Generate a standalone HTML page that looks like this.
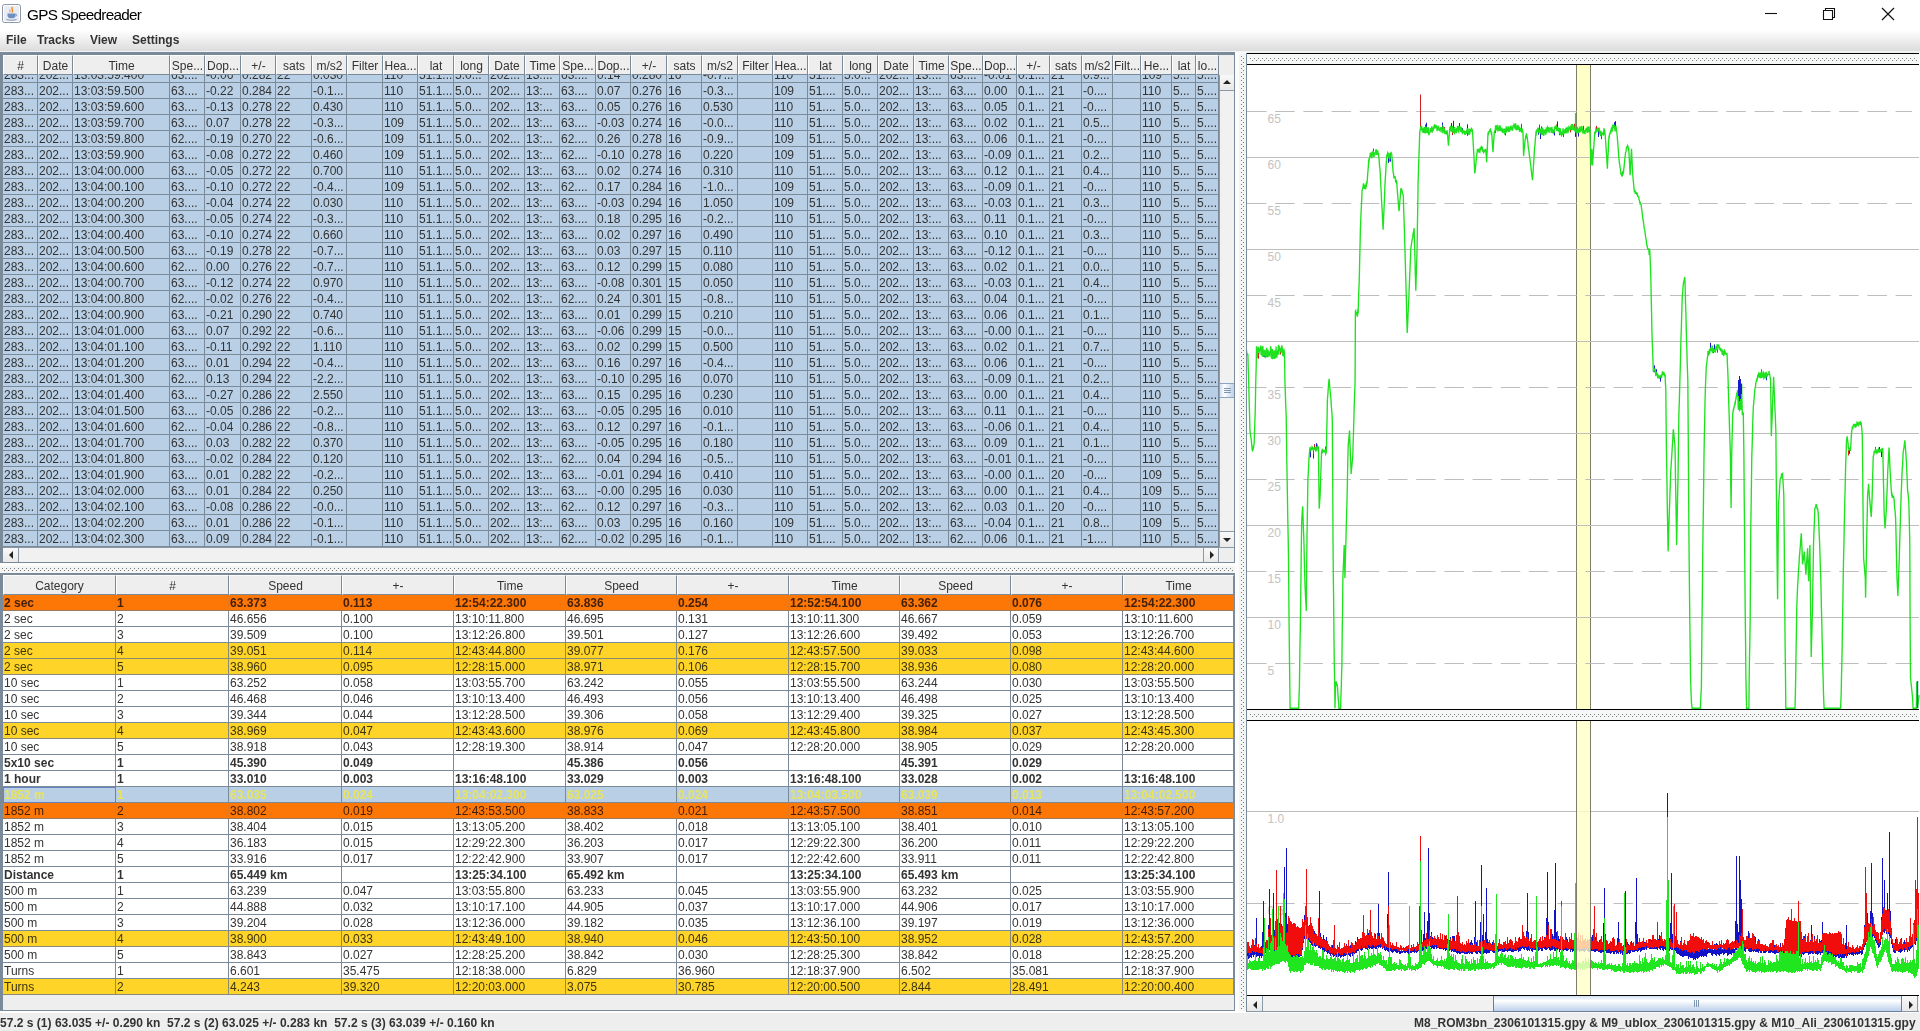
<!DOCTYPE html>
<html lang="en"><head><meta charset="utf-8"><title>GPS Speedreader</title>
<style>
*{margin:0;padding:0;box-sizing:border-box}
html,body{width:1920px;height:1031px;overflow:hidden}
body{position:relative;background:#eee;-webkit-font-smoothing:antialiased;font-family:"Liberation Sans",sans-serif;font-size:12px;color:#333;line-height:15px}
.a{position:absolute}
#tb,#mb,.h,.st{will-change:transform}
#tb{left:0;top:0;width:1920px;height:30px;background:#fff}
#tt{left:27px;top:5px;font-size:15.3px;line-height:20px;color:#000;white-space:nowrap;letter-spacing:-0.72px}
#mb{left:0;top:30px;width:1920px;height:22px;background:linear-gradient(#fff,#dcdcdc);border-bottom:1px solid #f1f4f7}
#mb b{position:absolute;top:3px;line-height:14px;color:#333;white-space:nowrap}
.dk{background:#7a8a99}
.h{display:flex;position:absolute;height:20px;background:#eee}
.h span{flex:none;height:20px;border-top:1px solid #fff;border-left:1px solid #fff;border-right:1px solid #7a8a99;border-bottom:1px solid #7a8a99;text-align:center;white-space:nowrap;overflow:hidden;line-height:16px;padding-top:2px;color:#333}
.h span.l{text-align:left}
.r{display:flex;height:16px}
.r span{flex:none;height:16px;border-right:1px solid #7a8a99;border-bottom:1px solid #7a8a99;white-space:nowrap;overflow:hidden;padding-left:1px;line-height:15px;padding-top:1px}
#t1{will-change:transform;left:3px;top:75px;width:1216px;height:472px;overflow:hidden;background:#b8cfe5}
#t1i{position:absolute;left:0;top:-8px}
#t2{will-change:transform;left:3px;top:595px;width:1231px;height:400px;background:#fff}
.o span{background:#fc7705;border-right-color:#ec7714;border-bottom-color:#9a7a5c;color:#45200a}
.y span{background:#fed428;color:#3d3410;border-right-color:#8c8a72;border-bottom-color:#8c8a72}
.b span{font-weight:bold}
.s span{background:#b8cfe5;color:#e9e45c}
.s span:first-child{outline:1px solid #6382bf;outline-offset:-1px}
.sbb{background:linear-gradient(#f8f8f8,#e9e9e9)}
.sbh{background:linear-gradient(#f8f8f8,#e9e9e9)}
.dotsh{background-color:#f7f9f9;background-image:radial-gradient(circle at 0.5px 0.5px,#777 0.6px,transparent 0.9px),radial-gradient(circle at 2.5px 2.5px,#777 0.6px,transparent 0.9px);background-size:4px 4px}

#t1 .r span:nth-child(1),#h1 span:nth-child(1){width:35px}
#t1 .r span:nth-child(2),#h1 span:nth-child(2){width:35px}
#t1 .r span:nth-child(3),#h1 span:nth-child(3){width:97px}
#t1 .r span:nth-child(4),#h1 span:nth-child(4){width:35px}
#t1 .r span:nth-child(5),#h1 span:nth-child(5){width:36px}
#t1 .r span:nth-child(6),#h1 span:nth-child(6){width:35px}
#t1 .r span:nth-child(7),#h1 span:nth-child(7){width:36px}
#t1 .r span:nth-child(8),#h1 span:nth-child(8){width:35px}
#t1 .r span:nth-child(9),#h1 span:nth-child(9){width:36px}
#t1 .r span:nth-child(10),#h1 span:nth-child(10){width:35px}
#t1 .r span:nth-child(11),#h1 span:nth-child(11){width:36px}
#t1 .r span:nth-child(12),#h1 span:nth-child(12){width:35px}
#t1 .r span:nth-child(13),#h1 span:nth-child(13){width:36px}
#t1 .r span:nth-child(14),#h1 span:nth-child(14){width:35px}
#t1 .r span:nth-child(15),#h1 span:nth-child(15){width:36px}
#t1 .r span:nth-child(16),#h1 span:nth-child(16){width:35px}
#t1 .r span:nth-child(17),#h1 span:nth-child(17){width:36px}
#t1 .r span:nth-child(18),#h1 span:nth-child(18){width:35px}
#t1 .r span:nth-child(19),#h1 span:nth-child(19){width:36px}
#t1 .r span:nth-child(20),#h1 span:nth-child(20){width:35px}
#t1 .r span:nth-child(21),#h1 span:nth-child(21){width:35px}
#t1 .r span:nth-child(22),#h1 span:nth-child(22){width:35px}
#t1 .r span:nth-child(23),#h1 span:nth-child(23){width:35px}
#t1 .r span:nth-child(24),#h1 span:nth-child(24){width:36px}
#t1 .r span:nth-child(25),#h1 span:nth-child(25){width:35px}
#t1 .r span:nth-child(26),#h1 span:nth-child(26){width:34px}
#t1 .r span:nth-child(27),#h1 span:nth-child(27){width:34px}
#t1 .r span:nth-child(28),#h1 span:nth-child(28){width:33px}
#t1 .r span:nth-child(29),#h1 span:nth-child(29){width:32px}
#t1 .r span:nth-child(30),#h1 span:nth-child(30){width:31px}
#t1 .r span:nth-child(31),#h1 span:nth-child(31){width:28px}
#t1 .r span:nth-child(32),#h1 span:nth-child(32){width:31px}
#t1 .r span:nth-child(33),#h1 span:nth-child(33){width:24px}
#t1 .r span:nth-child(34),#h1 span:nth-child(34){width:23px}
#t2 .r span:nth-child(1),#h2 span:nth-child(1){width:113px}
#t2 .r span:nth-child(2),#h2 span:nth-child(2){width:113px}
#t2 .r span:nth-child(3),#h2 span:nth-child(3){width:113px}
#t2 .r span:nth-child(4),#h2 span:nth-child(4){width:112px}
#t2 .r span:nth-child(5),#h2 span:nth-child(5){width:112px}
#t2 .r span:nth-child(6),#h2 span:nth-child(6){width:111px}
#t2 .r span:nth-child(7),#h2 span:nth-child(7){width:112px}
#t2 .r span:nth-child(8),#h2 span:nth-child(8){width:111px}
#t2 .r span:nth-child(9),#h2 span:nth-child(9){width:111px}
#t2 .r span:nth-child(10),#h2 span:nth-child(10){width:112px}
#t2 .r span:nth-child(11),#h2 span:nth-child(11){width:111px}</style></head>
<body>
<div class="a" id="tb">
<svg class="a" style="left:2px;top:4px" width="20" height="20" viewBox="0 0 20 20"><rect x="0.5" y="0.5" width="18" height="18" rx="2" fill="#e9ecf2" stroke="#8d97a8"/><rect x="1.5" y="1.5" width="16" height="16" rx="1.5" fill="none" stroke="#fff"/><path d="M10.5 3c-2 2 1.5 3-0.5 5.5" stroke="#e8842c" stroke-width="1.4" fill="none"/><path d="M8 5.5c-1 1 .8 1.6-.2 2.8" stroke="#e8842c" stroke-width="1" fill="none"/><path d="M5.5 9.5h8v2.2c0 1.6-1.6 2.6-4 2.6s-4-1-4-2.6z" fill="#6f8fc0"/><path d="M13.5 10.2c1.6-.2 1.8 1.8 0 1.9" stroke="#6f8fc0" stroke-width="0.9" fill="none"/><path d="M4.5 15.5c3 1 7 1 10 0" stroke="#7f95b8" stroke-width="1" fill="none"/></svg>
<div class="a" id="tt">GPS Speedreader</div>
<svg class="a" style="left:1750px;top:0" width="170" height="30" viewBox="0 0 170 30" fill="none" stroke="#111" stroke-width="1.1"><path d="M15 13.5h12"/><path d="M73.5 10.5h9v9h-9z M75.5 10.5v-2h9v9h-2"/><path d="M132 8l12 12M144 8l-12 12" stroke-width="1.2"/></svg>
</div>
<div class="a" id="mb"><b style="left:6px">File</b><b style="left:37px">Tracks</b><b style="left:90px">View</b><b style="left:132px">Settings</b></div>
<div class="a dk" style="left:0;top:52px;width:1235px;height:3px"></div>
<div class="a dk" style="left:0;top:52px;width:3px;height:511px"></div>
<div class="a dk" style="left:1234px;top:52px;width:1px;height:511px"></div>
<div class="a dk" style="left:0;top:562px;width:1235px;height:1px"></div>
<div class="h" id="h1" style="left:3px;top:55px;width:1231px">
<span>#</span>
<span>Date</span>
<span>Time</span>
<span>Spe...</span>
<span>Dop...</span>
<span>+/-</span>
<span>sats</span>
<span>m/s2</span>
<span>Filter</span>
<span>Hea...</span>
<span>lat</span>
<span>long</span>
<span>Date</span>
<span>Time</span>
<span>Spe...</span>
<span>Dop...</span>
<span>+/-</span>
<span>sats</span>
<span>m/s2</span>
<span>Filter</span>
<span>Hea...</span>
<span>lat</span>
<span>long</span>
<span>Date</span>
<span>Time</span>
<span>Spe...</span>
<span>Dop...</span>
<span>+/-</span>
<span>sats</span>
<span>m/s2</span>
<span>Filt...</span>
<span>He...</span>
<span>lat</span>
<span>lo...</span>
</div>
<div class="a" id="t1"><div id="t1i">
<div class="r"><span>283...</span><span>202...</span><span>13:03:59.400</span><span>63....</span><span>-0.06</span><span>0.282</span><span>22</span><span>0.030</span><span></span><span>110</span><span>51.1...</span><span>5.0...</span><span>202...</span><span>13:...</span><span>63....</span><span>0.14</span><span>0.280</span><span>16</span><span>-0.7...</span><span></span><span>110</span><span>51....</span><span>5.0...</span><span>202...</span><span>13:...</span><span>63....</span><span>-0.01</span><span>0.1...</span><span>21</span><span>0.9...</span><span></span><span>109</span><span>5...</span><span>5....</span></div>
<div class="r"><span>283...</span><span>202...</span><span>13:03:59.500</span><span>63....</span><span>-0.22</span><span>0.284</span><span>22</span><span>-0.1...</span><span></span><span>110</span><span>51.1...</span><span>5.0...</span><span>202...</span><span>13:...</span><span>63....</span><span>0.07</span><span>0.276</span><span>16</span><span>-0.3...</span><span></span><span>109</span><span>51....</span><span>5.0...</span><span>202...</span><span>13:...</span><span>63....</span><span>0.00</span><span>0.1...</span><span>21</span><span>-0....</span><span></span><span>110</span><span>5...</span><span>5....</span></div>
<div class="r"><span>283...</span><span>202...</span><span>13:03:59.600</span><span>63....</span><span>-0.13</span><span>0.278</span><span>22</span><span>0.430</span><span></span><span>110</span><span>51.1...</span><span>5.0...</span><span>202...</span><span>13:...</span><span>63....</span><span>0.05</span><span>0.276</span><span>16</span><span>0.530</span><span></span><span>110</span><span>51....</span><span>5.0...</span><span>202...</span><span>13:...</span><span>63....</span><span>0.05</span><span>0.1...</span><span>21</span><span>-0....</span><span></span><span>110</span><span>5...</span><span>5....</span></div>
<div class="r"><span>283...</span><span>202...</span><span>13:03:59.700</span><span>63....</span><span>0.07</span><span>0.278</span><span>22</span><span>-0.3...</span><span></span><span>109</span><span>51.1...</span><span>5.0...</span><span>202...</span><span>13:...</span><span>63....</span><span>-0.03</span><span>0.274</span><span>16</span><span>-0.0...</span><span></span><span>110</span><span>51....</span><span>5.0...</span><span>202...</span><span>13:...</span><span>63....</span><span>0.02</span><span>0.1...</span><span>21</span><span>0.5...</span><span></span><span>110</span><span>5...</span><span>5....</span></div>
<div class="r"><span>283...</span><span>202...</span><span>13:03:59.800</span><span>62....</span><span>-0.19</span><span>0.270</span><span>22</span><span>-0.6...</span><span></span><span>109</span><span>51.1...</span><span>5.0...</span><span>202...</span><span>13:...</span><span>62....</span><span>0.26</span><span>0.278</span><span>16</span><span>-0.9...</span><span></span><span>109</span><span>51....</span><span>5.0...</span><span>202...</span><span>13:...</span><span>63....</span><span>0.06</span><span>0.1...</span><span>21</span><span>-0....</span><span></span><span>110</span><span>5...</span><span>5....</span></div>
<div class="r"><span>283...</span><span>202...</span><span>13:03:59.900</span><span>63....</span><span>-0.08</span><span>0.272</span><span>22</span><span>0.460</span><span></span><span>109</span><span>51.1...</span><span>5.0...</span><span>202...</span><span>13:...</span><span>62....</span><span>-0.10</span><span>0.278</span><span>16</span><span>0.220</span><span></span><span>109</span><span>51....</span><span>5.0...</span><span>202...</span><span>13:...</span><span>63....</span><span>-0.09</span><span>0.1...</span><span>21</span><span>0.2...</span><span></span><span>110</span><span>5...</span><span>5....</span></div>
<div class="r"><span>283...</span><span>202...</span><span>13:04:00.000</span><span>63....</span><span>-0.05</span><span>0.272</span><span>22</span><span>0.700</span><span></span><span>110</span><span>51.1...</span><span>5.0...</span><span>202...</span><span>13:...</span><span>63....</span><span>0.02</span><span>0.274</span><span>16</span><span>0.310</span><span></span><span>110</span><span>51....</span><span>5.0...</span><span>202...</span><span>13:...</span><span>63....</span><span>0.12</span><span>0.1...</span><span>21</span><span>0.4...</span><span></span><span>110</span><span>5...</span><span>5....</span></div>
<div class="r"><span>283...</span><span>202...</span><span>13:04:00.100</span><span>63....</span><span>-0.10</span><span>0.272</span><span>22</span><span>-0.4...</span><span></span><span>109</span><span>51.1...</span><span>5.0...</span><span>202...</span><span>13:...</span><span>62....</span><span>0.17</span><span>0.284</span><span>16</span><span>-1.0...</span><span></span><span>109</span><span>51....</span><span>5.0...</span><span>202...</span><span>13:...</span><span>63....</span><span>-0.09</span><span>0.1...</span><span>21</span><span>-0....</span><span></span><span>110</span><span>5...</span><span>5....</span></div>
<div class="r"><span>283...</span><span>202...</span><span>13:04:00.200</span><span>63....</span><span>-0.04</span><span>0.274</span><span>22</span><span>0.030</span><span></span><span>110</span><span>51.1...</span><span>5.0...</span><span>202...</span><span>13:...</span><span>63....</span><span>-0.03</span><span>0.294</span><span>16</span><span>1.050</span><span></span><span>109</span><span>51....</span><span>5.0...</span><span>202...</span><span>13:...</span><span>63....</span><span>-0.03</span><span>0.1...</span><span>21</span><span>0.3...</span><span></span><span>110</span><span>5...</span><span>5....</span></div>
<div class="r"><span>283...</span><span>202...</span><span>13:04:00.300</span><span>63....</span><span>-0.05</span><span>0.274</span><span>22</span><span>-0.3...</span><span></span><span>110</span><span>51.1...</span><span>5.0...</span><span>202...</span><span>13:...</span><span>63....</span><span>0.18</span><span>0.295</span><span>16</span><span>-0.2...</span><span></span><span>110</span><span>51....</span><span>5.0...</span><span>202...</span><span>13:...</span><span>63....</span><span>0.11</span><span>0.1...</span><span>21</span><span>-0....</span><span></span><span>110</span><span>5...</span><span>5....</span></div>
<div class="r"><span>283...</span><span>202...</span><span>13:04:00.400</span><span>63....</span><span>-0.10</span><span>0.274</span><span>22</span><span>0.660</span><span></span><span>110</span><span>51.1...</span><span>5.0...</span><span>202...</span><span>13:...</span><span>63....</span><span>0.02</span><span>0.297</span><span>16</span><span>0.490</span><span></span><span>110</span><span>51....</span><span>5.0...</span><span>202...</span><span>13:...</span><span>63....</span><span>0.10</span><span>0.1...</span><span>21</span><span>0.3...</span><span></span><span>110</span><span>5...</span><span>5....</span></div>
<div class="r"><span>283...</span><span>202...</span><span>13:04:00.500</span><span>63....</span><span>-0.19</span><span>0.278</span><span>22</span><span>-0.7...</span><span></span><span>110</span><span>51.1...</span><span>5.0...</span><span>202...</span><span>13:...</span><span>63....</span><span>0.03</span><span>0.297</span><span>15</span><span>0.110</span><span></span><span>110</span><span>51....</span><span>5.0...</span><span>202...</span><span>13:...</span><span>63....</span><span>-0.12</span><span>0.1...</span><span>21</span><span>-0....</span><span></span><span>110</span><span>5...</span><span>5....</span></div>
<div class="r"><span>283...</span><span>202...</span><span>13:04:00.600</span><span>62....</span><span>0.00</span><span>0.276</span><span>22</span><span>-0.7...</span><span></span><span>110</span><span>51.1...</span><span>5.0...</span><span>202...</span><span>13:...</span><span>63....</span><span>0.12</span><span>0.299</span><span>15</span><span>0.080</span><span></span><span>110</span><span>51....</span><span>5.0...</span><span>202...</span><span>13:...</span><span>63....</span><span>0.02</span><span>0.1...</span><span>21</span><span>0.0...</span><span></span><span>110</span><span>5...</span><span>5....</span></div>
<div class="r"><span>283...</span><span>202...</span><span>13:04:00.700</span><span>63....</span><span>-0.12</span><span>0.274</span><span>22</span><span>0.970</span><span></span><span>110</span><span>51.1...</span><span>5.0...</span><span>202...</span><span>13:...</span><span>63....</span><span>-0.08</span><span>0.301</span><span>15</span><span>0.050</span><span></span><span>110</span><span>51....</span><span>5.0...</span><span>202...</span><span>13:...</span><span>63....</span><span>-0.03</span><span>0.1...</span><span>21</span><span>0.4...</span><span></span><span>110</span><span>5...</span><span>5....</span></div>
<div class="r"><span>283...</span><span>202...</span><span>13:04:00.800</span><span>62....</span><span>-0.02</span><span>0.276</span><span>22</span><span>-0.4...</span><span></span><span>110</span><span>51.1...</span><span>5.0...</span><span>202...</span><span>13:...</span><span>62....</span><span>0.24</span><span>0.301</span><span>15</span><span>-0.8...</span><span></span><span>110</span><span>51....</span><span>5.0...</span><span>202...</span><span>13:...</span><span>63....</span><span>0.04</span><span>0.1...</span><span>21</span><span>-0....</span><span></span><span>110</span><span>5...</span><span>5....</span></div>
<div class="r"><span>283...</span><span>202...</span><span>13:04:00.900</span><span>63....</span><span>-0.21</span><span>0.290</span><span>22</span><span>0.740</span><span></span><span>110</span><span>51.1...</span><span>5.0...</span><span>202...</span><span>13:...</span><span>63....</span><span>0.01</span><span>0.299</span><span>15</span><span>0.210</span><span></span><span>110</span><span>51....</span><span>5.0...</span><span>202...</span><span>13:...</span><span>63....</span><span>0.06</span><span>0.1...</span><span>21</span><span>0.1...</span><span></span><span>110</span><span>5...</span><span>5....</span></div>
<div class="r"><span>283...</span><span>202...</span><span>13:04:01.000</span><span>63....</span><span>0.07</span><span>0.292</span><span>22</span><span>-0.6...</span><span></span><span>110</span><span>51.1...</span><span>5.0...</span><span>202...</span><span>13:...</span><span>63....</span><span>-0.06</span><span>0.299</span><span>15</span><span>-0.0...</span><span></span><span>110</span><span>51....</span><span>5.0...</span><span>202...</span><span>13:...</span><span>63....</span><span>-0.00</span><span>0.1...</span><span>21</span><span>-0....</span><span></span><span>110</span><span>5...</span><span>5....</span></div>
<div class="r"><span>283...</span><span>202...</span><span>13:04:01.100</span><span>63....</span><span>-0.11</span><span>0.292</span><span>22</span><span>1.110</span><span></span><span>110</span><span>51.1...</span><span>5.0...</span><span>202...</span><span>13:...</span><span>63....</span><span>0.02</span><span>0.299</span><span>15</span><span>0.500</span><span></span><span>110</span><span>51....</span><span>5.0...</span><span>202...</span><span>13:...</span><span>63....</span><span>0.02</span><span>0.1...</span><span>21</span><span>0.7...</span><span></span><span>110</span><span>5...</span><span>5....</span></div>
<div class="r"><span>283...</span><span>202...</span><span>13:04:01.200</span><span>63....</span><span>0.01</span><span>0.294</span><span>22</span><span>-0.4...</span><span></span><span>110</span><span>51.1...</span><span>5.0...</span><span>202...</span><span>13:...</span><span>63....</span><span>0.16</span><span>0.297</span><span>16</span><span>-0.4...</span><span></span><span>110</span><span>51....</span><span>5.0...</span><span>202...</span><span>13:...</span><span>63....</span><span>0.06</span><span>0.1...</span><span>21</span><span>-0....</span><span></span><span>110</span><span>5...</span><span>5....</span></div>
<div class="r"><span>283...</span><span>202...</span><span>13:04:01.300</span><span>62....</span><span>0.13</span><span>0.294</span><span>22</span><span>-2.2...</span><span></span><span>110</span><span>51.1...</span><span>5.0...</span><span>202...</span><span>13:...</span><span>63....</span><span>-0.10</span><span>0.295</span><span>16</span><span>0.070</span><span></span><span>110</span><span>51....</span><span>5.0...</span><span>202...</span><span>13:...</span><span>63....</span><span>-0.09</span><span>0.1...</span><span>21</span><span>0.2...</span><span></span><span>110</span><span>5...</span><span>5....</span></div>
<div class="r"><span>283...</span><span>202...</span><span>13:04:01.400</span><span>63....</span><span>-0.27</span><span>0.286</span><span>22</span><span>2.550</span><span></span><span>110</span><span>51.1...</span><span>5.0...</span><span>202...</span><span>13:...</span><span>63....</span><span>0.15</span><span>0.295</span><span>16</span><span>0.230</span><span></span><span>110</span><span>51....</span><span>5.0...</span><span>202...</span><span>13:...</span><span>63....</span><span>0.00</span><span>0.1...</span><span>21</span><span>0.4...</span><span></span><span>110</span><span>5...</span><span>5....</span></div>
<div class="r"><span>283...</span><span>202...</span><span>13:04:01.500</span><span>63....</span><span>-0.05</span><span>0.286</span><span>22</span><span>-0.2...</span><span></span><span>110</span><span>51.1...</span><span>5.0...</span><span>202...</span><span>13:...</span><span>63....</span><span>-0.05</span><span>0.295</span><span>16</span><span>0.010</span><span></span><span>110</span><span>51....</span><span>5.0...</span><span>202...</span><span>13:...</span><span>63....</span><span>0.11</span><span>0.1...</span><span>21</span><span>-0....</span><span></span><span>110</span><span>5...</span><span>5....</span></div>
<div class="r"><span>283...</span><span>202...</span><span>13:04:01.600</span><span>62....</span><span>-0.04</span><span>0.286</span><span>22</span><span>-0.8...</span><span></span><span>110</span><span>51.1...</span><span>5.0...</span><span>202...</span><span>13:...</span><span>63....</span><span>0.12</span><span>0.297</span><span>16</span><span>-0.1...</span><span></span><span>110</span><span>51....</span><span>5.0...</span><span>202...</span><span>13:...</span><span>63....</span><span>-0.06</span><span>0.1...</span><span>21</span><span>0.4...</span><span></span><span>110</span><span>5...</span><span>5....</span></div>
<div class="r"><span>283...</span><span>202...</span><span>13:04:01.700</span><span>63....</span><span>0.03</span><span>0.282</span><span>22</span><span>0.370</span><span></span><span>110</span><span>51.1...</span><span>5.0...</span><span>202...</span><span>13:...</span><span>63....</span><span>-0.05</span><span>0.295</span><span>16</span><span>0.180</span><span></span><span>110</span><span>51....</span><span>5.0...</span><span>202...</span><span>13:...</span><span>63....</span><span>0.09</span><span>0.1...</span><span>21</span><span>0.1...</span><span></span><span>110</span><span>5...</span><span>5....</span></div>
<div class="r"><span>283...</span><span>202...</span><span>13:04:01.800</span><span>63....</span><span>-0.02</span><span>0.284</span><span>22</span><span>0.120</span><span></span><span>110</span><span>51.1...</span><span>5.0...</span><span>202...</span><span>13:...</span><span>62....</span><span>0.04</span><span>0.294</span><span>16</span><span>-0.5...</span><span></span><span>110</span><span>51....</span><span>5.0...</span><span>202...</span><span>13:...</span><span>63....</span><span>-0.01</span><span>0.1...</span><span>21</span><span>-0....</span><span></span><span>110</span><span>5...</span><span>5....</span></div>
<div class="r"><span>283...</span><span>202...</span><span>13:04:01.900</span><span>63....</span><span>0.01</span><span>0.282</span><span>22</span><span>-0.2...</span><span></span><span>110</span><span>51.1...</span><span>5.0...</span><span>202...</span><span>13:...</span><span>63....</span><span>-0.01</span><span>0.294</span><span>16</span><span>0.410</span><span></span><span>110</span><span>51....</span><span>5.0...</span><span>202...</span><span>13:...</span><span>63....</span><span>-0.00</span><span>0.1...</span><span>20</span><span>-0....</span><span></span><span>109</span><span>5...</span><span>5....</span></div>
<div class="r"><span>283...</span><span>202...</span><span>13:04:02.000</span><span>63....</span><span>0.01</span><span>0.284</span><span>22</span><span>0.250</span><span></span><span>110</span><span>51.1...</span><span>5.0...</span><span>202...</span><span>13:...</span><span>63....</span><span>-0.00</span><span>0.295</span><span>16</span><span>0.030</span><span></span><span>110</span><span>51....</span><span>5.0...</span><span>202...</span><span>13:...</span><span>63....</span><span>0.00</span><span>0.1...</span><span>21</span><span>0.4...</span><span></span><span>109</span><span>5...</span><span>5....</span></div>
<div class="r"><span>283...</span><span>202...</span><span>13:04:02.100</span><span>63....</span><span>-0.08</span><span>0.286</span><span>22</span><span>-0.0...</span><span></span><span>110</span><span>51.1...</span><span>5.0...</span><span>202...</span><span>13:...</span><span>62....</span><span>0.12</span><span>0.297</span><span>16</span><span>-0.3...</span><span></span><span>110</span><span>51....</span><span>5.0...</span><span>202...</span><span>13:...</span><span>62....</span><span>0.03</span><span>0.1...</span><span>20</span><span>-0....</span><span></span><span>110</span><span>5...</span><span>5....</span></div>
<div class="r"><span>283...</span><span>202...</span><span>13:04:02.200</span><span>63....</span><span>0.01</span><span>0.286</span><span>22</span><span>-0.1...</span><span></span><span>110</span><span>51.1...</span><span>5.0...</span><span>202...</span><span>13:...</span><span>63....</span><span>0.03</span><span>0.295</span><span>16</span><span>0.160</span><span></span><span>109</span><span>51....</span><span>5.0...</span><span>202...</span><span>13:...</span><span>63....</span><span>-0.04</span><span>0.1...</span><span>21</span><span>0.8...</span><span></span><span>109</span><span>5...</span><span>5....</span></div>
<div class="r"><span>283...</span><span>202...</span><span>13:04:02.300</span><span>63....</span><span>0.09</span><span>0.284</span><span>22</span><span>-0.1...</span><span></span><span>110</span><span>51.1...</span><span>5.0...</span><span>202...</span><span>13:...</span><span>62....</span><span>-0.02</span><span>0.295</span><span>16</span><span>-0.1...</span><span></span><span>110</span><span>51....</span><span>5.0...</span><span>202...</span><span>13:...</span><span>62....</span><span>0.06</span><span>0.1...</span><span>21</span><span>-1....</span><span></span><span>110</span><span>5...</span><span>5....</span></div>
</div></div>
<div class="a" style="left:1219px;top:75px;width:15px;height:472px;background:#f1f1f1;border-left:1px solid #8b98a6"></div>
<div class="a sbb" style="left:1220px;top:75px;width:14px;height:16px;border-bottom:1px solid #8b98a6"></div>
<div class="a sbb" style="left:1220px;top:531px;width:14px;height:16px;border-top:1px solid #8b98a6"></div>
<svg class="a" style="left:1220px;top:75px" width="14" height="472" viewBox="0 0 14 472"><path d="M3 9h8l-4-4z" fill="#222"/><path d="M3 463h8l-4 4z" fill="#222"/></svg>
<div class="a" style="left:1219px;top:383px;width:15px;height:15px;border:1px solid #8ea3c0;border-right:0;background:linear-gradient(90deg,#d3e0f2 0%,#fff 32%,#e3ecf6 58%,#bdd0ec 100%)"></div>
<svg class="a" style="left:1220px;top:383px" width="14" height="15"><path d="M4 5.5h7M4 7.5h7M4 9.5h7" stroke="#7f95b0" stroke-width="1"/></svg>
<div class="a" style="left:3px;top:547px;width:1231px;height:15px;background:#f1f1f1;border-top:1px solid #8b98a6"></div>
<div class="a sbh" style="left:3px;top:548px;width:16px;height:14px;border-right:1px solid #8b98a6"></div>
<div class="a sbh" style="left:1203px;top:548px;width:16px;height:14px;border-left:1px solid #8b98a6;border-right:1px solid #8b98a6"></div>
<svg class="a" style="left:3px;top:548px" width="1216" height="14" viewBox="0 0 1216 14"><path d="M10 3v8l-4-4z" fill="#222"/><path d="M1207 3v8l4-4z" fill="#222"/></svg>
<div class="a" style="left:1220px;top:548px;width:14px;height:14px;background:#eee"></div>
<div class="a" style="left:0;top:563px;width:1235px;height:10px;background:#fcfcfc"></div>
<div class="a" style="left:0;top:566px;width:1235px;height:7px;background:#f3f5f5"></div>
<div class="a dotsh" style="left:2px;top:568px;width:1232px;height:4px;background-color:#f3f5f5"></div>
<div class="a" style="left:1235px;top:52px;width:11px;height:960px;background:#fcfcfc"></div>
<div class="a" style="left:1239px;top:54px;width:7px;height:958px;background:#f3f5f5"></div>
<div class="a dotsh" style="left:1241px;top:56px;width:4px;height:954px;background-color:#f3f5f5"></div>
<div class="a dk" style="left:1246px;top:53px;width:1px;height:959px"></div>
<div class="a dk" style="left:0;top:573px;width:1235px;height:2px"></div>
<div class="a dk" style="left:0;top:573px;width:3px;height:438px"></div>
<div class="a dk" style="left:1234px;top:573px;width:1px;height:438px"></div>
<div class="a dk" style="left:0;top:1010px;width:1235px;height:1px"></div>
<div class="a" style="left:0;top:1011px;width:1246px;height:2px;background:#fff"></div>
<div class="a" style="left:1246px;top:1012px;width:674px;height:1px;background:#fafafa"></div>
<div class="a" style="left:0;top:1030px;width:1920px;height:1px;background:#e6ebeb"></div>
<div class="h" id="h2" style="left:3px;top:575px;width:1231px">
<span>Category</span>
<span>#</span>
<span>Speed</span>
<span>+-</span>
<span>Time</span>
<span>Speed</span>
<span>+-</span>
<span>Time</span>
<span>Speed</span>
<span>+-</span>
<span>Time</span>
</div>
<div class="a" id="t2">
<div class="r o b"><span>2 sec</span><span>1</span><span>63.373</span><span>0.113</span><span>12:54:22.300</span><span>63.836</span><span>0.254</span><span>12:52:54.100</span><span>63.362</span><span>0.076</span><span>12:54:22.300</span></div>
<div class="r "><span>2 sec</span><span>2</span><span>46.656</span><span>0.100</span><span>13:10:11.800</span><span>46.695</span><span>0.131</span><span>13:10:11.300</span><span>46.667</span><span>0.059</span><span>13:10:11.600</span></div>
<div class="r "><span>2 sec</span><span>3</span><span>39.509</span><span>0.100</span><span>13:12:26.800</span><span>39.501</span><span>0.127</span><span>13:12:26.600</span><span>39.492</span><span>0.053</span><span>13:12:26.700</span></div>
<div class="r y"><span>2 sec</span><span>4</span><span>39.051</span><span>0.114</span><span>12:43:44.800</span><span>39.077</span><span>0.176</span><span>12:43:57.500</span><span>39.033</span><span>0.098</span><span>12:43:44.600</span></div>
<div class="r y"><span>2 sec</span><span>5</span><span>38.960</span><span>0.095</span><span>12:28:15.000</span><span>38.971</span><span>0.106</span><span>12:28:15.700</span><span>38.936</span><span>0.080</span><span>12:28:20.000</span></div>
<div class="r "><span>10 sec</span><span>1</span><span>63.252</span><span>0.058</span><span>13:03:55.700</span><span>63.242</span><span>0.055</span><span>13:03:55.500</span><span>63.244</span><span>0.030</span><span>13:03:55.500</span></div>
<div class="r "><span>10 sec</span><span>2</span><span>46.468</span><span>0.046</span><span>13:10:13.400</span><span>46.493</span><span>0.056</span><span>13:10:13.400</span><span>46.498</span><span>0.025</span><span>13:10:13.400</span></div>
<div class="r "><span>10 sec</span><span>3</span><span>39.344</span><span>0.044</span><span>13:12:28.500</span><span>39.306</span><span>0.058</span><span>13:12:29.400</span><span>39.325</span><span>0.027</span><span>13:12:28.500</span></div>
<div class="r y"><span>10 sec</span><span>4</span><span>38.969</span><span>0.047</span><span>12:43:43.600</span><span>38.976</span><span>0.069</span><span>12:43:45.800</span><span>38.984</span><span>0.037</span><span>12:43:45.300</span></div>
<div class="r "><span>10 sec</span><span>5</span><span>38.918</span><span>0.043</span><span>12:28:19.300</span><span>38.914</span><span>0.047</span><span>12:28:20.000</span><span>38.905</span><span>0.029</span><span>12:28:20.000</span></div>
<div class="r b"><span>5x10 sec</span><span>1</span><span>45.390</span><span>0.049</span><span></span><span>45.386</span><span>0.056</span><span></span><span>45.391</span><span>0.029</span><span></span></div>
<div class="r b"><span>1 hour</span><span>1</span><span>33.010</span><span>0.003</span><span>13:16:48.100</span><span>33.029</span><span>0.003</span><span>13:16:48.100</span><span>33.028</span><span>0.002</span><span>13:16:48.100</span></div>
<div class="r s b"><span>1852 m</span><span>1</span><span>63.035</span><span>0.024</span><span>13:04:02.300</span><span>63.025</span><span>0.024</span><span>13:04:03.500</span><span>63.039</span><span>0.013</span><span>13:04:02.500</span></div>
<div class="r o"><span>1852 m</span><span>2</span><span>38.802</span><span>0.019</span><span>12:43:53.500</span><span>38.833</span><span>0.021</span><span>12:43:57.500</span><span>38.851</span><span>0.014</span><span>12:43:57.200</span></div>
<div class="r "><span>1852 m</span><span>3</span><span>38.404</span><span>0.015</span><span>13:13:05.200</span><span>38.402</span><span>0.018</span><span>13:13:05.100</span><span>38.401</span><span>0.010</span><span>13:13:05.100</span></div>
<div class="r "><span>1852 m</span><span>4</span><span>36.183</span><span>0.015</span><span>12:29:22.300</span><span>36.203</span><span>0.017</span><span>12:29:22.300</span><span>36.200</span><span>0.011</span><span>12:29:22.200</span></div>
<div class="r "><span>1852 m</span><span>5</span><span>33.916</span><span>0.017</span><span>12:22:42.900</span><span>33.907</span><span>0.017</span><span>12:22:42.600</span><span>33.911</span><span>0.011</span><span>12:22:42.800</span></div>
<div class="r b"><span>Distance</span><span>1</span><span>65.449 km</span><span></span><span>13:25:34.100</span><span>65.492 km</span><span></span><span>13:25:34.100</span><span>65.493 km</span><span></span><span>13:25:34.100</span></div>
<div class="r "><span>500 m</span><span>1</span><span>63.239</span><span>0.047</span><span>13:03:55.800</span><span>63.233</span><span>0.045</span><span>13:03:55.900</span><span>63.232</span><span>0.025</span><span>13:03:55.900</span></div>
<div class="r "><span>500 m</span><span>2</span><span>44.888</span><span>0.032</span><span>13:10:17.100</span><span>44.905</span><span>0.037</span><span>13:10:17.000</span><span>44.906</span><span>0.017</span><span>13:10:17.000</span></div>
<div class="r "><span>500 m</span><span>3</span><span>39.204</span><span>0.028</span><span>13:12:36.000</span><span>39.182</span><span>0.035</span><span>13:12:36.100</span><span>39.197</span><span>0.019</span><span>13:12:36.000</span></div>
<div class="r y"><span>500 m</span><span>4</span><span>38.900</span><span>0.033</span><span>12:43:49.100</span><span>38.940</span><span>0.046</span><span>12:43:50.100</span><span>38.952</span><span>0.028</span><span>12:43:57.200</span></div>
<div class="r "><span>500 m</span><span>5</span><span>38.843</span><span>0.027</span><span>12:28:25.200</span><span>38.842</span><span>0.030</span><span>12:28:25.300</span><span>38.842</span><span>0.018</span><span>12:28:25.200</span></div>
<div class="r "><span>Turns</span><span>1</span><span>6.601</span><span>35.475</span><span>12:18:38.000</span><span>6.829</span><span>36.960</span><span>12:18:37.900</span><span>6.502</span><span>35.081</span><span>12:18:37.900</span></div>
<div class="r y"><span>Turns</span><span>2</span><span>4.243</span><span>39.320</span><span>12:20:03.000</span><span>3.075</span><span>30.785</span><span>12:20:00.500</span><span>2.844</span><span>28.491</span><span>12:20:00.400</span></div>
</div>
<svg class="a" style="left:0;top:0" width="1920" height="1031" viewBox="0 0 1920 1031" font-family="Liberation Sans, sans-serif">
<defs><pattern id="dp" x="1250" y="58" width="4" height="4" patternUnits="userSpaceOnUse"><rect x="0" y="0" width="1" height="1" fill="#7c7c7c"/><rect x="2" y="2" width="1" height="1" fill="#7c7c7c"/></pattern><clipPath id="c1"><rect x="1247" y="65" width="673" height="644"/></clipPath><clipPath id="c2"><rect x="1247" y="721" width="673" height="274"/></clipPath></defs>
<rect x="1247" y="53" width="673" height="959" fill="#fff"/>
<rect x="1247" y="53" width="672" height="12" fill="#f6f8f8"/>
<rect x="1247" y="53" width="672" height="1" fill="#000"/>
<rect x="1247" y="64" width="672" height="1" fill="#000"/>
<rect x="1247" y="709" width="672" height="12" fill="#f6f8f8"/>
<rect x="1247" y="709" width="672" height="1" fill="#000"/>
<rect x="1247" y="720" width="672" height="1" fill="#000"/>
<rect x="1250" y="58" width="668" height="4" fill="url(#dp)"/>
<rect x="1250" y="714" width="668" height="4" fill="url(#dp)"/>
<rect x="1247" y="995" width="672" height="1" fill="#000"/>
<rect x="1577" y="65" width="13" height="644" fill="#ffffc8" fill-opacity="1"/>
<rect x="1576" y="65" width="1" height="644" fill="#7d7d6a"/>
<rect x="1590" y="65" width="1" height="644" fill="#7d7d6a"/>
<path d="M1247 663.5H1912" stroke="#bdbdbd" stroke-dasharray="19.5 8.7" fill="none"/>
<text x="1267.5" y="674.7" font-size="12" fill="#c3c3c3">5</text>
<path d="M1247 617.5H1919" stroke="#bdbdbd" fill="none"/>
<text x="1267.5" y="628.7" font-size="12" fill="#c3c3c3">10</text>
<path d="M1247 571.5H1912" stroke="#bdbdbd" stroke-dasharray="19.5 8.7" fill="none"/>
<text x="1267.5" y="582.7" font-size="12" fill="#c3c3c3">15</text>
<path d="M1247 525.5H1919" stroke="#bdbdbd" fill="none"/>
<text x="1267.5" y="536.7" font-size="12" fill="#c3c3c3">20</text>
<path d="M1247 479.5H1912" stroke="#bdbdbd" stroke-dasharray="19.5 8.7" fill="none"/>
<text x="1267.5" y="490.7" font-size="12" fill="#c3c3c3">25</text>
<path d="M1247 433.5H1919" stroke="#bdbdbd" fill="none"/>
<text x="1267.5" y="444.7" font-size="12" fill="#c3c3c3">30</text>
<path d="M1247 387.5H1912" stroke="#bdbdbd" stroke-dasharray="19.5 8.7" fill="none"/>
<text x="1267.5" y="398.7" font-size="12" fill="#c3c3c3">35</text>
<path d="M1247 341.5H1919" stroke="#bdbdbd" fill="none"/>
<path d="M1247 295.5H1912" stroke="#bdbdbd" stroke-dasharray="19.5 8.7" fill="none"/>
<text x="1267.5" y="306.7" font-size="12" fill="#c3c3c3">45</text>
<path d="M1247 249.5H1919" stroke="#bdbdbd" fill="none"/>
<text x="1267.5" y="260.7" font-size="12" fill="#c3c3c3">50</text>
<path d="M1247 203.5H1912" stroke="#bdbdbd" stroke-dasharray="19.5 8.7" fill="none"/>
<text x="1267.5" y="214.7" font-size="12" fill="#c3c3c3">55</text>
<path d="M1247 157.5H1919" stroke="#bdbdbd" fill="none"/>
<text x="1267.5" y="168.7" font-size="12" fill="#c3c3c3">60</text>
<path d="M1247 111.5H1912" stroke="#bdbdbd" stroke-dasharray="19.5 8.7" fill="none"/>
<text x="1267.5" y="122.7" font-size="12" fill="#c3c3c3">65</text>
<path d="M1247 811.5H1919" stroke="#bdbdbd" fill="none"/>
<path d="M1247 903.5H1912" stroke="#bdbdbd" stroke-dasharray="19.5 8.7" fill="none"/>
<text x="1267.5" y="822.7" font-size="12" fill="#c3c3c3">1.0</text>
<text x="1267.5" y="914.7" font-size="12" fill="#c3c3c3">0.5</text>
<g clip-path="url(#c1)">
<path d="M1261.5 350.7v3.7M1264.5 351.8v5.3M1284.5 351.8v5.5M1310.5 449.9v7.5M1313.5 449.6v8.9M1314.5 449.8v-5.4M1316.5 449.2v-6.0M1335.5 683.6v6.6M1355.5 313.6v4.4M1365.5 185.5v3.7M1388.5 155.6v7.3M1390.5 155.6v6.0M1426.5 129.8v-7.1M1442.5 129.3v-6.8M1451.5 129.1v-6.1M1453.5 129.5v-8.7M1459.5 129.3v-6.2M1462.5 131.9v-3.9M1467.5 130.9v-6.6M1505.5 130.0v5.4M1521.5 129.7v-4.1M1538.5 130.6v4.1M1540.5 130.6v8.4M1554.5 129.0v6.5M1557.5 129.1v-7.7M1559.5 130.6v4.6M1575.5 128.6v8.3M1578.5 129.9v6.7M1598.5 130.9v6.1M1614.5 127.5v-5.4M1615.5 128.3v-7.2M1654.5 372.2v-6.8M1656.5 374.2v-4.9M1660.5 375.9v5.7M1710.5 350.2v-7.4M1714.5 349.6v-5.2M1766.5 374.3v6.0M1849.5 450.1v3.7M1879.5 451.0v-4.0M1881.5 448.8v8.3" fill="none" stroke="#1a1ad0" stroke-width="1"/>
<path d="M1258.5 352.7v6.0M1263.5 350.9v6.1M1280.5 350.4v4.1M1313.5 449.6v4.7M1314.5 449.8v-5.3M1317.5 448.3v-3.7M1325.5 451.7v-5.2M1373.5 154.8v-6.3M1389.5 155.7v5.7M1425.5 129.8v-5.4M1428.5 130.6v3.7M1444.5 131.0v-3.9M1449.5 129.7v6.0M1452.5 129.3v5.8M1467.5 131.0v4.9M1495.5 128.7v4.5M1521.5 129.7v-5.9M1539.5 130.4v-5.8M1541.5 131.3v-5.0M1556.5 128.6v-4.1M1559.5 131.0v3.8M1561.5 131.7v4.8M1563.5 130.7v6.4M1570.5 128.8v3.6M1571.5 127.7v-3.7M1574.5 128.2v-4.4M1583.5 130.7v-4.9M1596.5 130.0v-4.2M1601.5 132.8v6.4M1713.5 349.2v3.9M1717.5 348.6v4.1M1761.5 374.7v-5.4M1848.5 450.3v5.2M1875.5 451.2v-4.3" fill="none" stroke="#e01a1a" stroke-width="1"/>
<path d="M1420.5 94.5V130" stroke="#d02020" stroke-width="1" fill="none"/>
<polyline points="1246.6,350.5 1246.9,353.8 1247.3,354.4 1247.6,353.4 1247.9,355.1 1248.2,366.7 1248.6,378.3 1248.9,389.9 1249.2,403.1 1249.6,416.3 1249.9,429.5 1250.2,431.9 1250.5,434.7 1250.8,437.5 1251.1,438.7 1251.4,441.1 1251.7,445.0 1251.9,446.8 1252.2,449.9 1252.5,450.7 1252.8,450.2 1253.1,449.4 1253.4,446.6 1253.6,446.8 1253.9,445.2 1254.2,442.7 1254.5,432.8 1254.8,422.9 1255.2,413.0 1255.5,396.5 1255.8,380.0 1256.2,366.4 1256.5,346.9 1256.8,346.9 1257.0,353.2 1257.3,358.1 1257.6,351.3 1257.9,349.3 1258.1,351.8 1258.4,346.9 1258.7,349.2 1258.9,351.7 1259.2,352.3 1259.5,348.9 1259.8,348.7 1260.0,348.4 1260.3,351.1 1260.6,348.8 1260.8,345.4 1261.1,355.2 1261.4,351.6 1261.7,352.5 1261.9,346.8 1262.2,356.6 1262.5,355.0 1262.8,346.0 1263.0,348.6 1263.3,353.5 1263.6,353.5 1263.8,356.5 1264.1,350.4 1264.4,355.6 1264.7,353.9 1264.9,349.7 1265.2,353.4 1265.5,357.3 1265.7,357.1 1266.0,353.1 1266.3,354.3 1266.6,347.7 1266.8,350.4 1267.1,357.2 1267.4,352.6 1267.7,349.6 1267.9,354.2 1268.2,356.1 1268.5,355.6 1268.7,351.9 1269.0,352.5 1269.3,353.3 1269.6,356.5 1269.8,353.2 1270.1,351.6 1270.4,352.7 1270.6,347.0 1270.9,347.2 1271.2,355.3 1271.5,358.7 1271.7,354.0 1272.0,351.6 1272.3,349.0 1272.5,353.1 1272.8,359.1 1273.1,356.6 1273.4,353.8 1273.6,357.8 1273.9,350.2 1274.2,353.6 1274.5,359.0 1274.7,354.3 1275.0,352.7 1275.3,350.3 1275.5,353.5 1275.8,358.3 1276.1,346.4 1276.4,355.7 1276.6,355.9 1276.9,356.4 1277.2,354.3 1277.4,354.9 1277.7,351.1 1278.0,351.4 1278.3,349.5 1278.5,344.8 1278.8,354.7 1279.1,350.9 1279.4,346.3 1279.6,350.1 1279.9,349.9 1280.2,348.4 1280.4,348.4 1280.7,350.9 1281.0,352.1 1281.3,352.1 1281.5,350.4 1281.8,345.3 1282.1,347.9 1282.3,347.4 1282.6,352.6 1282.9,356.1 1283.2,355.4 1283.4,355.4 1283.7,355.7 1284.0,348.8 1284.3,356.0 1284.5,351.8 1284.9,380.0 1285.2,389.1 1285.5,398.1 1285.8,407.2 1286.2,416.3 1286.5,438.3 1286.8,460.3 1287.2,482.2 1287.5,501.2 1287.8,520.2 1288.2,539.1 1288.5,558.1 1288.8,592.2 1289.1,626.3 1289.5,660.3 1289.8,684.3 1290.1,708.2 1290.4,708.2 1290.7,708.2 1291.0,708.2 1291.2,708.2 1291.5,708.2 1291.8,708.2 1292.1,708.2 1292.3,708.2 1292.6,708.2 1292.9,708.2 1293.2,708.2 1293.5,708.2 1293.7,708.2 1294.0,708.2 1294.3,708.2 1294.6,708.2 1294.8,708.2 1295.1,708.2 1295.4,708.2 1295.7,708.2 1295.9,708.2 1296.2,708.2 1296.5,708.2 1296.8,708.2 1297.0,708.2 1297.3,708.2 1297.6,708.2 1297.9,708.2 1298.2,708.2 1298.4,708.2 1298.7,708.2 1299.0,697.4 1299.4,686.7 1299.7,665.3 1300.0,643.9 1300.4,622.4 1300.7,601.0 1301.0,574.6 1301.3,548.2 1301.7,521.8 1302.0,516.7 1302.3,511.5 1302.7,506.3 1303.0,516.0 1303.3,525.6 1303.7,535.3 1304.0,544.9 1304.3,558.1 1304.6,571.3 1305.0,584.5 1305.3,591.1 1305.6,597.7 1306.0,604.3 1306.3,610.9 1306.6,574.6 1307.0,538.3 1307.3,518.5 1307.6,498.7 1307.9,478.9 1308.3,472.8 1308.6,466.6 1308.9,460.4 1309.3,454.6 1309.6,450.9 1309.9,448.0 1310.2,447.8 1310.5,451.4 1310.8,448.7 1311.0,447.8 1311.3,450.3 1311.6,448.8 1311.9,447.3 1312.1,447.8 1312.4,449.6 1312.7,447.8 1313.0,448.4 1313.2,450.6 1313.5,449.4 1313.8,448.8 1314.1,449.6 1314.3,447.4 1314.6,449.2 1314.9,449.4 1315.2,448.2 1315.5,447.8 1315.7,451.7 1316.0,449.6 1316.3,447.9 1316.6,449.8 1316.8,450.6 1317.1,446.4 1317.4,446.1 1317.7,446.5 1317.9,449.2 1318.2,446.2 1318.5,449.3 1318.8,478.9 1319.2,508.6 1319.5,504.2 1319.8,499.8 1320.1,495.4 1320.5,485.1 1320.8,474.8 1321.1,464.5 1321.5,454.5 1321.8,450.7 1322.1,450.3 1322.3,448.9 1322.6,453.0 1322.9,452.3 1323.2,451.1 1323.4,449.8 1323.7,452.1 1324.0,451.0 1324.2,452.0 1324.5,450.8 1324.8,452.3 1325.1,449.5 1325.3,450.6 1325.6,454.0 1325.9,453.5 1326.1,450.5 1326.4,450.9 1326.7,433.9 1327.1,416.8 1327.4,399.8 1327.7,396.2 1328.0,392.6 1328.2,389.1 1328.5,385.5 1328.8,381.9 1329.1,378.9 1329.3,381.1 1329.6,385.1 1329.9,387.8 1330.1,390.3 1330.4,393.1 1330.7,396.5 1331.0,400.3 1331.2,404.2 1331.5,408.0 1331.8,411.9 1332.1,415.7 1332.3,419.6 1332.7,478.9 1333.0,538.3 1333.3,572.4 1333.7,606.5 1334.0,640.6 1334.3,663.1 1334.7,685.6 1335.0,708.2 1335.3,696.6 1335.6,681.3 1335.9,685.5 1336.2,681.2 1336.5,685.0 1336.7,685.7 1337.0,683.8 1337.3,685.1 1337.6,688.9 1337.8,692.8 1338.1,696.6 1338.4,700.5 1338.7,704.3 1338.9,708.2 1339.2,708.2 1339.5,708.2 1339.8,708.2 1340.0,708.2 1340.3,708.2 1340.6,708.2 1340.9,697.0 1341.3,685.9 1341.6,674.8 1341.9,663.6 1342.2,635.1 1342.6,606.5 1342.9,577.9 1343.2,569.6 1343.6,561.4 1343.9,553.2 1344.2,544.9 1344.6,561.4 1344.9,577.9 1345.2,565.8 1345.5,553.7 1345.9,541.6 1346.2,529.2 1346.5,516.9 1346.9,504.5 1347.2,492.1 1347.5,476.7 1347.8,461.4 1348.2,445.5 1348.5,442.6 1348.8,438.9 1349.2,434.6 1349.5,430.5 1349.8,437.7 1350.0,445.0 1350.3,452.2 1350.6,459.5 1350.9,466.7 1351.1,474.0 1351.4,470.8 1351.7,467.7 1352.0,464.5 1352.2,462.2 1352.5,458.8 1352.8,455.9 1353.1,444.3 1353.5,432.8 1353.8,421.2 1354.1,409.7 1354.4,399.8 1354.8,389.9 1355.1,380.0 1355.4,311.4 1355.7,310.8 1356.0,314.9 1356.3,312.2 1356.6,313.6 1356.9,312.3 1357.2,316.1 1357.5,316.2 1357.8,309.6 1358.1,313.9 1358.4,304.0 1358.7,294.1 1359.1,284.2 1359.4,274.3 1359.7,258.9 1360.1,243.5 1360.4,228.1 1360.7,222.1 1360.9,216.0 1361.2,210.0 1361.5,203.9 1361.8,197.9 1362.0,191.2 1362.4,189.2 1362.7,188.5 1363.0,187.2 1363.3,184.2 1363.6,183.4 1363.9,186.9 1364.2,188.2 1364.4,188.9 1364.7,184.7 1365.0,188.6 1365.3,187.1 1365.6,185.5 1365.8,189.0 1366.1,183.4 1366.4,186.8 1366.7,181.9 1367.0,183.6 1367.3,180.0 1367.5,176.4 1367.8,172.9 1368.1,169.3 1368.4,165.7 1368.6,161.3 1368.9,161.8 1369.2,158.7 1369.5,158.7 1369.7,156.9 1370.0,156.1 1370.3,153.6 1370.6,153.5 1370.8,153.2 1371.1,157.4 1371.4,155.6 1371.7,158.2 1371.9,157.7 1372.2,152.3 1372.5,155.3 1372.8,152.0 1373.0,151.4 1373.3,151.5 1373.6,157.1 1373.9,156.3 1374.1,156.4 1374.4,152.6 1374.7,154.3 1374.9,155.3 1375.2,152.1 1375.5,153.2 1375.8,150.5 1376.0,149.3 1376.3,150.4 1376.6,154.8 1376.9,152.4 1377.1,154.9 1377.4,151.5 1377.7,150.3 1378.0,154.0 1378.2,154.5 1378.5,153.1 1378.8,157.2 1379.1,159.3 1379.3,162.4 1379.6,166.6 1379.9,168.3 1380.2,172.0 1380.4,177.5 1380.7,183.0 1381.0,188.5 1381.3,194.0 1381.5,199.5 1381.8,205.0 1382.2,211.2 1382.5,217.4 1382.8,223.6 1383.1,229.7 1383.4,222.9 1383.7,216.1 1384.0,209.3 1384.3,202.4 1384.6,195.6 1384.8,188.8 1385.1,181.9 1385.4,177.5 1385.7,173.1 1385.9,168.7 1386.2,164.3 1386.5,159.9 1386.8,154.5 1387.1,157.0 1387.4,154.1 1387.8,152.7 1388.0,153.2 1388.3,153.9 1388.6,157.6 1388.9,153.0 1389.2,158.8 1389.5,154.9 1389.7,159.1 1390.0,158.5 1390.3,153.9 1390.6,153.4 1390.9,154.7 1391.1,151.8 1391.4,155.5 1391.7,153.9 1392.0,157.5 1392.3,161.0 1392.5,164.6 1392.8,168.2 1393.1,171.8 1393.4,173.6 1393.6,174.0 1393.9,178.3 1394.2,176.2 1394.5,177.9 1394.7,177.9 1395.0,177.9 1395.3,177.5 1395.6,181.3 1395.8,182.1 1396.1,182.6 1396.4,179.9 1396.7,181.9 1397.0,185.6 1397.2,189.3 1397.5,193.1 1397.8,196.8 1398.1,200.5 1398.4,204.2 1398.7,207.9 1399.0,211.2 1399.3,208.5 1399.5,205.7 1399.8,201.8 1400.1,198.7 1400.4,195.4 1400.7,191.5 1400.9,188.7 1401.2,188.7 1401.5,189.3 1401.8,189.6 1402.1,191.1 1402.4,194.3 1402.7,193.3 1403.0,194.8 1403.3,195.1 1403.5,203.9 1403.8,212.7 1404.1,221.5 1404.4,230.3 1404.6,239.1 1404.9,247.9 1405.2,258.5 1405.5,269.2 1405.8,279.8 1406.1,290.4 1406.4,301.1 1406.6,311.7 1406.9,322.3 1407.2,333.0 1407.5,327.0 1407.8,321.1 1408.0,315.2 1408.3,309.2 1408.6,303.3 1408.9,297.4 1409.1,290.3 1409.4,283.2 1409.7,276.2 1410.0,269.1 1410.3,262.0 1410.6,255.0 1410.8,248.2 1411.1,247.3 1411.4,244.3 1411.7,242.5 1411.9,240.9 1412.2,239.2 1412.5,238.8 1412.8,237.3 1413.0,234.2 1413.3,232.7 1413.6,231.5 1413.9,229.9 1414.1,228.1 1414.4,238.5 1414.7,249.0 1415.0,259.4 1415.2,269.9 1415.5,280.3 1415.8,290.8 1416.1,280.0 1416.5,269.3 1416.8,258.6 1417.1,247.9 1417.4,225.9 1417.8,203.9 1418.1,181.9 1418.4,173.7 1418.6,165.4 1418.9,157.2 1419.2,148.9 1419.5,140.7 1419.7,132.8 1420.1,130.6 1420.4,128.7 1420.7,127.3 1421.0,126.3 1421.3,130.0 1421.6,126.7 1421.8,126.9 1422.1,131.1 1422.4,128.7 1422.6,132.3 1422.9,130.2 1423.2,132.8 1423.5,127.7 1423.7,130.2 1424.0,132.2 1424.3,127.0 1424.5,133.2 1424.8,127.5 1425.1,131.8 1425.4,133.3 1425.6,132.1 1425.9,128.4 1426.2,126.9 1426.5,129.9 1426.7,132.9 1427.0,128.5 1427.3,132.9 1427.5,127.7 1427.8,133.3 1428.1,127.1 1428.4,129.3 1428.6,133.6 1428.9,133.0 1429.2,133.8 1429.4,133.3 1429.7,132.7 1430.0,132.2 1430.3,128.4 1430.5,130.1 1430.8,128.0 1431.1,131.8 1431.3,131.2 1431.6,128.0 1431.9,126.4 1432.2,132.6 1432.4,131.2 1432.7,129.1 1433.0,128.8 1433.3,130.8 1433.5,127.7 1433.8,127.1 1434.1,126.6 1434.3,126.0 1434.6,124.2 1434.9,128.7 1435.2,127.1 1435.4,128.3 1435.7,124.8 1436.0,127.0 1436.2,125.6 1436.5,125.7 1436.8,126.8 1437.1,131.1 1437.3,128.2 1437.6,128.3 1437.9,130.0 1438.1,127.3 1438.4,125.8 1438.7,129.6 1439.0,129.4 1439.2,130.5 1439.5,128.9 1439.8,130.7 1440.1,131.0 1440.3,127.4 1440.6,129.2 1440.9,129.0 1441.1,127.1 1441.4,128.5 1441.7,129.6 1442.0,132.1 1442.2,132.3 1442.5,127.7 1442.8,130.6 1443.0,126.4 1443.3,126.8 1443.6,130.2 1443.9,133.0 1444.1,128.1 1444.4,132.7 1444.7,133.8 1444.9,129.9 1445.2,132.8 1445.5,134.1 1445.8,130.8 1446.0,133.3 1446.3,133.6 1446.6,132.6 1446.9,134.4 1447.1,130.4 1447.5,134.4 1447.8,137.8 1448.1,141.2 1448.4,145.6 1448.8,141.7 1449.1,137.7 1449.4,133.8 1449.8,127.9 1450.0,127.5 1450.3,129.9 1450.6,131.1 1450.8,126.0 1451.1,130.4 1451.4,130.7 1451.7,128.0 1451.9,129.3 1452.2,126.8 1452.5,130.9 1452.7,126.1 1453.0,132.9 1453.3,131.7 1453.6,130.5 1453.8,128.0 1454.1,132.6 1454.4,133.0 1454.6,127.0 1454.9,131.6 1455.2,132.0 1455.5,130.6 1455.7,130.8 1456.0,128.8 1456.3,132.1 1456.5,132.3 1456.8,128.0 1457.1,130.9 1457.3,128.1 1457.6,126.1 1457.9,127.2 1458.2,125.8 1458.4,131.4 1458.7,131.9 1459.0,125.9 1459.2,129.6 1459.5,128.4 1459.8,126.5 1460.1,128.0 1460.3,128.0 1460.6,131.9 1460.9,126.8 1461.1,128.4 1461.4,130.5 1461.7,127.7 1462.0,132.3 1462.2,132.4 1462.5,134.2 1462.8,129.8 1463.0,130.5 1463.3,132.4 1463.6,130.5 1463.9,132.7 1464.1,130.2 1464.4,133.3 1464.7,133.9 1464.9,133.9 1465.2,135.0 1465.5,131.8 1465.7,131.2 1466.0,133.8 1466.3,133.0 1466.6,131.5 1466.8,130.1 1467.1,129.4 1467.4,128.1 1467.6,133.2 1467.9,128.3 1468.2,132.9 1468.5,131.5 1468.7,134.6 1469.0,133.2 1469.3,134.8 1469.5,128.8 1469.8,131.5 1470.1,132.0 1470.4,130.1 1470.6,131.5 1470.9,130.4 1471.2,131.5 1471.4,127.6 1471.7,130.6 1472.0,130.4 1472.2,129.2 1472.5,130.8 1472.8,136.2 1473.1,141.5 1473.4,146.9 1473.7,152.2 1474.0,157.6 1474.3,163.0 1474.5,168.3 1474.8,173.5 1475.1,171.4 1475.4,168.5 1475.7,165.4 1476.0,162.9 1476.3,159.7 1476.6,156.7 1476.9,153.6 1477.2,151.3 1477.5,148.8 1477.7,151.1 1478.0,150.9 1478.3,148.9 1478.6,152.5 1478.8,148.8 1479.1,151.7 1479.4,148.7 1479.7,151.2 1479.9,153.0 1480.2,148.1 1480.5,147.1 1480.8,150.3 1481.0,149.6 1481.3,148.3 1481.6,145.7 1481.9,148.4 1482.1,148.6 1482.4,148.4 1482.7,151.7 1483.0,149.8 1483.2,150.9 1483.5,152.1 1483.8,151.2 1484.1,149.5 1484.3,151.4 1484.6,150.8 1484.9,151.1 1485.2,151.1 1485.4,149.7 1485.7,148.9 1486.0,153.3 1486.4,157.7 1486.7,162.1 1487.0,154.7 1487.4,147.3 1487.7,139.9 1488.0,133.0 1488.3,132.5 1488.6,133.3 1488.9,132.2 1489.2,132.0 1489.4,131.2 1489.7,130.9 1490.0,129.6 1490.3,129.1 1490.5,129.4 1490.8,131.6 1491.1,132.8 1491.4,132.1 1491.6,132.5 1492.0,137.4 1492.3,142.3 1492.6,147.3 1493.0,152.2 1493.3,147.3 1493.6,142.3 1494.0,137.4 1494.3,131.2 1494.6,132.8 1494.9,130.7 1495.3,129.9 1495.6,125.4 1495.9,128.8 1496.2,130.4 1496.4,128.0 1496.7,127.5 1497.0,129.6 1497.2,124.9 1497.5,128.3 1497.8,131.4 1498.1,129.5 1498.3,127.3 1498.6,129.4 1498.9,128.8 1499.1,125.9 1499.4,126.0 1499.7,131.0 1500.0,126.7 1500.2,125.5 1500.5,131.1 1500.8,129.1 1501.0,128.2 1501.3,129.5 1501.6,131.4 1501.9,127.6 1502.1,131.3 1502.4,131.9 1502.7,132.9 1503.0,129.1 1503.2,131.7 1503.5,129.0 1503.8,131.4 1504.0,128.6 1504.3,133.0 1504.6,133.5 1504.9,129.5 1505.1,128.6 1505.4,133.7 1505.7,131.7 1505.9,132.4 1506.2,126.4 1506.5,132.4 1506.8,130.2 1507.0,127.8 1507.3,128.5 1507.6,130.7 1507.8,130.8 1508.1,126.4 1508.4,129.5 1508.7,126.2 1508.9,132.0 1509.2,128.2 1509.5,131.6 1509.8,130.3 1510.0,129.5 1510.3,127.1 1510.6,129.0 1510.8,126.2 1511.1,126.2 1511.4,130.3 1511.7,127.7 1511.9,130.4 1512.2,126.7 1512.5,130.0 1512.7,129.8 1513.0,126.6 1513.3,125.0 1513.6,126.9 1513.8,127.4 1514.1,124.4 1514.4,124.8 1514.6,123.7 1514.9,127.5 1515.2,129.5 1515.5,124.6 1515.7,123.3 1516.0,128.2 1516.3,129.1 1516.6,130.3 1516.8,127.9 1517.1,126.1 1517.4,129.9 1517.6,125.0 1517.9,129.4 1518.2,125.4 1518.5,127.8 1518.7,128.8 1519.0,128.1 1519.3,126.8 1519.5,127.5 1519.8,131.9 1520.1,129.4 1520.4,130.3 1520.6,127.7 1520.9,131.3 1521.2,128.5 1521.4,130.4 1521.7,132.6 1522.0,129.9 1522.3,128.5 1522.7,132.0 1523.0,132.5 1523.3,144.0 1523.6,156.1 1523.9,152.2 1524.2,149.3 1524.5,146.6 1524.7,144.1 1525.0,140.3 1525.3,139.2 1525.6,138.3 1525.8,135.2 1526.1,138.5 1526.4,134.1 1526.7,134.4 1526.9,136.1 1527.2,137.1 1527.5,139.9 1527.8,141.6 1528.0,144.5 1528.3,147.4 1528.6,149.7 1528.9,150.3 1529.1,152.5 1529.4,156.2 1529.7,156.9 1530.0,159.5 1530.2,161.4 1530.5,163.6 1530.8,165.8 1531.1,169.2 1531.4,171.7 1531.7,173.8 1532.0,176.4 1532.3,178.3 1532.5,180.3 1532.8,175.8 1533.1,171.3 1533.4,166.8 1533.7,162.4 1534.0,157.9 1534.2,153.4 1534.5,148.8 1534.8,146.1 1535.1,143.6 1535.3,140.1 1535.6,136.5 1535.9,133.2 1536.2,133.8 1536.4,131.4 1536.7,129.7 1537.0,131.5 1537.3,131.2 1537.5,130.9 1537.8,127.5 1538.1,129.6 1538.3,130.0 1538.6,128.4 1538.9,133.2 1539.2,129.9 1539.4,131.6 1539.7,131.9 1540.0,132.2 1540.2,132.1 1540.5,132.4 1540.8,128.9 1541.0,134.2 1541.3,128.4 1541.6,134.1 1541.9,133.9 1542.1,134.1 1542.4,128.5 1542.7,129.0 1542.9,134.4 1543.2,132.0 1543.5,131.5 1543.8,136.0 1544.0,129.2 1544.3,132.8 1544.6,132.1 1544.8,129.8 1545.1,131.6 1545.4,133.7 1545.7,134.7 1545.9,128.4 1546.2,131.7 1546.5,128.3 1546.7,133.2 1547.0,127.7 1547.3,127.1 1547.5,129.4 1547.8,131.7 1548.1,128.4 1548.4,127.0 1548.6,131.6 1548.9,131.6 1549.2,131.9 1549.4,127.9 1549.7,128.7 1550.0,127.5 1550.3,129.7 1550.5,128.2 1550.8,128.3 1551.1,131.6 1551.3,132.9 1551.6,130.3 1551.9,126.9 1552.1,130.8 1552.4,129.4 1552.7,133.2 1553.0,131.2 1553.2,132.0 1553.5,131.0 1553.8,129.6 1554.0,132.1 1554.3,131.5 1554.6,127.5 1554.9,126.4 1555.1,127.8 1555.4,128.8 1555.7,125.7 1555.9,127.4 1556.2,129.1 1556.5,125.3 1556.8,130.9 1557.0,129.8 1557.3,127.5 1557.6,127.6 1557.8,128.2 1558.1,128.3 1558.4,131.6 1558.6,130.0 1558.9,130.5 1559.2,128.0 1559.5,133.8 1559.7,129.8 1560.0,130.0 1560.3,128.3 1560.5,135.0 1560.8,131.5 1561.1,134.7 1561.4,134.8 1561.6,135.0 1561.9,133.9 1562.2,134.6 1562.4,134.4 1562.7,133.4 1563.0,128.4 1563.3,131.0 1563.5,131.2 1563.8,134.1 1564.1,132.4 1564.3,131.7 1564.6,131.9 1564.9,129.0 1565.1,133.1 1565.4,130.9 1565.7,129.2 1566.0,129.6 1566.2,133.4 1566.5,130.2 1566.8,127.6 1567.0,127.5 1567.3,131.5 1567.6,130.6 1567.9,133.1 1568.1,127.9 1568.4,129.5 1568.7,131.7 1568.9,126.7 1569.2,127.0 1569.5,130.0 1569.8,127.8 1570.0,126.5 1570.3,127.4 1570.6,129.8 1570.8,128.8 1571.1,125.3 1571.4,125.1 1571.6,130.4 1571.9,128.8 1572.2,125.2 1572.5,130.1 1572.7,123.9 1573.0,126.4 1573.3,129.8 1573.5,128.9 1573.8,125.9 1574.1,130.4 1574.4,128.5 1574.6,130.6 1574.9,131.0 1575.2,127.9 1575.4,129.9 1575.7,129.2 1576.0,132.3 1576.2,131.5 1576.5,131.1 1576.8,131.9 1577.1,133.4 1577.3,128.1 1577.6,127.8 1577.9,131.8 1578.1,132.0 1578.4,130.1 1578.7,129.8 1579.0,129.2 1579.2,132.6 1579.5,131.9 1579.8,130.3 1580.0,126.3 1580.3,132.1 1580.6,129.2 1580.9,127.3 1581.1,128.1 1581.4,130.9 1581.7,126.1 1582.0,127.0 1582.2,128.4 1582.5,132.8 1582.8,131.9 1583.1,133.7 1583.3,130.7 1583.6,131.1 1583.9,131.0 1584.1,131.0 1584.4,131.1 1584.7,133.2 1585.0,134.1 1585.2,130.1 1585.5,131.6 1585.8,129.2 1586.1,129.0 1586.3,130.2 1586.6,130.6 1586.9,130.1 1587.2,132.9 1587.4,126.7 1587.7,129.8 1588.0,132.2 1588.3,130.0 1588.5,128.6 1588.8,127.0 1589.1,127.0 1589.3,130.8 1589.6,130.4 1589.9,129.2 1590.2,141.2 1590.6,153.3 1590.9,165.4 1591.2,159.9 1591.5,154.4 1591.9,148.9 1592.2,157.2 1592.5,165.4 1592.8,161.1 1593.1,156.8 1593.4,152.4 1593.7,148.1 1594.0,143.8 1594.3,139.5 1594.6,135.1 1594.8,131.6 1595.1,133.1 1595.4,133.3 1595.7,132.6 1595.9,129.2 1596.2,129.8 1596.5,132.1 1596.8,129.1 1597.0,131.8 1597.3,129.9 1597.6,129.0 1597.9,130.0 1598.1,127.7 1598.4,129.6 1598.7,130.3 1599.0,127.6 1599.2,129.0 1599.5,129.9 1599.8,134.4 1600.1,132.7 1600.3,130.8 1600.6,136.1 1600.9,130.9 1601.2,132.9 1601.4,134.6 1601.7,134.3 1602.0,132.4 1602.3,134.8 1602.5,132.6 1602.8,134.1 1603.1,132.4 1603.4,135.6 1603.6,133.6 1603.9,128.8 1604.2,128.9 1604.5,134.7 1604.7,130.4 1605.1,134.0 1605.4,138.1 1605.7,142.3 1606.0,146.7 1606.3,151.1 1606.6,155.5 1606.8,159.9 1607.1,164.3 1607.4,168.7 1607.6,163.2 1607.9,157.7 1608.2,152.2 1608.5,146.7 1608.7,141.2 1609.0,135.7 1609.3,136.4 1609.6,133.8 1609.9,134.0 1610.2,133.6 1610.5,130.2 1610.8,131.2 1611.0,131.6 1611.3,128.6 1611.6,128.3 1611.9,126.8 1612.2,130.9 1612.4,131.0 1612.7,124.6 1613.0,127.7 1613.3,126.7 1613.5,128.5 1613.8,124.6 1614.1,125.7 1614.4,125.9 1614.6,127.5 1614.9,130.0 1615.2,130.7 1615.5,130.4 1615.7,129.9 1616.0,125.9 1616.3,128.9 1616.6,131.2 1616.9,132.5 1617.2,136.2 1617.5,140.0 1617.8,143.8 1618.1,147.5 1618.4,151.3 1618.6,155.1 1618.9,158.4 1619.2,160.9 1619.5,163.8 1619.8,164.2 1620.1,167.8 1620.4,168.3 1620.6,171.0 1620.9,174.1 1621.2,174.1 1621.5,175.0 1621.8,174.2 1622.1,175.7 1622.4,175.8 1622.7,172.4 1623.0,172.8 1623.2,174.1 1623.5,172.1 1623.8,168.7 1624.1,166.8 1624.4,163.3 1624.7,160.7 1624.9,157.1 1625.2,155.9 1625.5,152.7 1625.8,152.4 1626.1,151.4 1626.3,148.3 1626.6,148.0 1626.9,146.6 1627.2,146.6 1627.4,147.5 1627.7,145.7 1628.0,146.4 1628.3,148.6 1628.5,148.1 1628.8,148.9 1629.1,155.5 1629.5,162.1 1629.8,168.7 1630.1,175.3 1630.5,168.7 1630.8,162.1 1631.1,155.5 1631.5,148.9 1631.8,155.5 1632.1,162.1 1632.4,168.7 1632.8,174.7 1633.0,177.6 1633.3,180.9 1633.6,183.7 1633.9,187.1 1634.1,189.1 1634.4,192.3 1634.7,190.5 1635.0,192.0 1635.2,191.6 1635.5,193.8 1635.8,192.1 1636.1,192.2 1636.3,193.1 1636.6,193.9 1636.9,193.5 1637.2,195.1 1637.4,193.4 1637.7,196.4 1638.0,196.6 1638.3,196.9 1638.5,196.1 1638.8,197.8 1639.1,199.9 1639.4,200.5 1639.6,201.9 1639.9,203.0 1640.2,201.9 1640.5,203.3 1640.7,203.6 1641.0,204.2 1641.3,206.3 1641.6,208.6 1641.9,210.3 1642.2,213.3 1642.5,215.7 1642.7,217.5 1643.0,219.8 1643.3,220.9 1643.6,222.9 1643.9,225.7 1644.2,228.4 1644.5,229.4 1644.8,230.5 1645.1,232.6 1645.4,235.2 1645.7,237.9 1646.0,238.6 1646.3,240.5 1646.5,243.1 1646.8,245.4 1647.1,245.4 1647.4,247.5 1647.7,248.8 1648.0,249.1 1648.3,249.5 1648.5,248.4 1648.8,249.4 1649.1,253.4 1649.4,253.1 1649.6,248.7 1649.9,252.8 1650.3,262.2 1650.6,271.5 1650.9,280.9 1651.2,297.4 1651.6,313.9 1651.9,330.3 1652.2,340.2 1652.6,350.1 1652.9,360.0 1653.2,368.8 1653.5,372.1 1653.9,369.1 1654.2,370.6 1654.4,370.4 1654.7,368.9 1655.0,368.9 1655.2,369.9 1655.5,372.0 1655.8,376.1 1656.1,374.3 1656.3,371.7 1656.6,375.2 1656.9,372.6 1657.2,374.6 1657.4,373.5 1657.7,378.3 1658.0,374.3 1658.3,377.7 1658.5,376.7 1658.8,378.3 1659.1,376.7 1659.3,378.7 1659.6,375.3 1659.9,377.2 1660.2,376.7 1660.4,376.0 1660.7,376.1 1661.0,375.8 1661.3,374.6 1661.5,378.1 1661.8,376.0 1662.1,375.3 1662.4,371.6 1662.6,374.8 1662.9,372.3 1663.2,372.6 1663.5,374.2 1663.7,375.0 1664.0,372.9 1664.3,373.1 1664.5,375.1 1664.8,374.7 1665.1,374.9 1665.4,382.4 1665.8,389.9 1666.1,419.6 1666.4,449.3 1666.7,466.3 1667.0,483.3 1667.2,500.4 1667.5,517.4 1667.8,534.5 1668.1,551.5 1668.4,542.7 1668.6,533.9 1668.9,525.1 1669.2,516.3 1669.5,507.5 1669.8,498.7 1670.1,489.9 1670.4,481.1 1670.7,472.3 1671.0,467.6 1671.3,462.8 1671.6,458.1 1671.9,453.3 1672.2,448.5 1672.5,443.8 1672.8,439.0 1673.0,434.2 1673.3,429.3 1673.6,431.6 1673.9,434.8 1674.2,438.0 1674.4,440.5 1674.7,443.3 1675.0,446.0 1675.3,462.5 1675.5,478.9 1675.8,495.4 1676.1,511.9 1676.4,528.4 1676.6,544.9 1677.0,528.4 1677.3,511.9 1677.6,495.4 1678.0,478.9 1678.3,457.0 1678.6,435.0 1678.9,413.0 1679.3,402.0 1679.6,391.0 1679.9,380.0 1680.3,366.7 1680.6,353.5 1680.9,340.2 1681.3,329.5 1681.6,318.8 1681.9,308.1 1682.2,297.4 1682.6,293.2 1682.9,289.1 1683.2,285.0 1683.6,282.2 1683.9,281.1 1684.2,280.3 1684.6,277.1 1684.9,278.2 1685.2,290.1 1685.5,302.0 1685.9,313.9 1686.2,326.2 1686.5,338.6 1686.9,351.0 1687.2,363.3 1687.5,371.6 1687.8,379.8 1688.2,429.5 1688.5,474.5 1688.8,519.6 1689.2,564.7 1689.5,592.7 1689.8,620.8 1690.2,648.8 1690.5,676.8 1690.8,685.6 1691.1,694.4 1691.5,703.2 1691.8,705.7 1692.1,708.2 1692.4,708.2 1692.7,708.2 1693.0,708.2 1693.2,708.2 1693.5,708.2 1693.8,708.2 1694.1,708.2 1694.3,708.2 1694.6,708.2 1694.9,708.2 1695.2,708.2 1695.4,708.2 1695.7,708.2 1696.0,708.2 1696.3,708.2 1696.5,708.2 1696.8,708.2 1697.1,708.2 1697.4,708.2 1697.6,708.2 1697.9,708.2 1698.2,708.2 1698.5,708.2 1698.7,708.2 1699.0,708.2 1699.3,708.2 1699.6,708.2 1699.8,708.2 1700.1,708.2 1700.4,708.2 1700.7,701.0 1701.0,693.9 1701.4,686.7 1701.7,654.6 1702.0,622.4 1702.4,590.3 1702.7,558.1 1703.0,532.5 1703.4,507.0 1703.7,481.4 1704.0,455.9 1704.3,438.3 1704.7,420.7 1705.0,403.1 1705.3,391.5 1705.7,380.0 1706.0,373.3 1706.3,366.3 1706.6,364.8 1706.9,361.6 1707.1,360.8 1707.4,357.1 1707.7,356.4 1708.0,351.0 1708.3,355.2 1708.5,355.0 1708.8,351.0 1709.1,354.6 1709.4,349.1 1709.7,353.7 1709.9,350.0 1710.2,350.1 1710.5,347.5 1710.8,350.6 1711.1,348.0 1711.4,350.7 1711.6,351.4 1711.9,349.9 1712.2,345.5 1712.5,352.3 1712.8,352.0 1713.0,350.1 1713.3,348.2 1713.6,349.6 1713.9,352.0 1714.1,349.1 1714.4,351.5 1714.7,350.2 1714.9,349.0 1715.2,352.7 1715.5,348.9 1715.8,350.3 1716.0,346.2 1716.3,349.0 1716.6,345.7 1716.9,350.3 1717.1,345.0 1717.4,345.0 1717.7,345.1 1718.0,345.0 1718.2,347.3 1718.5,345.2 1718.8,345.3 1719.1,348.7 1719.3,348.8 1719.6,348.1 1719.9,349.2 1720.2,349.7 1720.4,347.7 1720.7,350.4 1721.0,348.5 1721.3,350.2 1721.5,349.8 1721.8,348.9 1722.1,353.5 1722.4,354.8 1722.6,350.6 1722.9,354.9 1723.2,351.2 1723.5,353.6 1723.7,356.1 1724.0,354.5 1724.3,349.4 1724.6,352.1 1724.8,351.7 1725.1,351.6 1725.4,354.2 1725.7,352.9 1726.0,354.4 1726.2,354.5 1726.5,354.4 1726.8,352.8 1727.1,355.1 1727.4,363.3 1727.8,371.6 1728.1,379.8 1728.4,390.9 1728.7,401.9 1729.1,413.0 1729.4,423.7 1729.7,434.4 1730.1,445.1 1730.4,455.9 1730.7,481.9 1731.1,508.0 1731.4,481.9 1731.7,455.9 1732.0,441.6 1732.4,427.3 1732.7,413.5 1733.0,412.8 1733.3,409.6 1733.6,409.7 1733.9,408.0 1734.1,406.4 1734.4,406.1 1734.7,405.6 1735.0,401.9 1735.3,402.6 1735.6,399.9 1735.9,399.5 1736.2,396.4 1736.5,396.3 1736.8,393.3 1737.1,392.4 1737.4,392.6 1737.7,389.9 1738.0,399.8 1738.3,409.7 1738.6,396.5 1739.0,383.3 1739.3,397.3 1739.6,411.3 1740.0,396.5 1740.3,381.6 1740.6,395.7 1740.9,409.7 1741.3,396.5 1741.6,383.3 1741.9,398.1 1742.3,414.4 1742.6,414.7 1742.9,412.7 1743.3,413.0 1743.6,434.4 1743.9,455.9 1744.2,496.5 1744.6,537.2 1744.9,577.9 1745.2,610.9 1745.6,643.9 1745.9,676.8 1746.2,692.5 1746.6,708.2 1746.8,708.2 1747.1,708.2 1747.4,708.2 1747.7,708.2 1748.0,708.2 1748.3,708.2 1748.6,708.2 1748.9,708.2 1749.2,676.8 1749.5,657.0 1749.9,637.3 1750.2,617.5 1750.5,571.3 1750.8,525.1 1751.2,502.0 1751.5,478.9 1751.8,455.9 1752.2,444.3 1752.5,432.8 1752.8,421.2 1753.2,409.7 1753.4,406.4 1753.7,403.1 1754.0,399.8 1754.3,396.5 1754.5,393.2 1754.8,389.8 1755.1,388.2 1755.4,387.2 1755.6,385.5 1755.9,382.6 1756.2,381.5 1756.5,380.2 1756.7,379.6 1757.0,380.3 1757.3,379.3 1757.6,376.1 1757.9,376.3 1758.2,374.7 1758.5,373.8 1758.8,373.2 1759.0,373.7 1759.3,377.7 1759.6,376.8 1759.8,377.5 1760.1,373.7 1760.4,372.6 1760.7,378.3 1760.9,377.1 1761.2,377.9 1761.5,371.2 1761.8,373.9 1762.0,375.6 1762.3,376.3 1762.6,377.6 1762.8,375.0 1763.1,374.0 1763.4,371.3 1763.7,377.1 1763.9,378.4 1764.2,377.8 1764.5,376.1 1764.7,373.7 1765.0,372.9 1765.3,376.7 1765.6,377.7 1765.8,377.8 1766.1,371.9 1766.4,374.7 1766.7,374.0 1766.9,373.2 1767.2,375.6 1767.5,376.5 1767.7,374.8 1768.0,374.5 1768.3,374.3 1768.6,374.0 1768.8,373.2 1769.1,371.1 1769.4,375.0 1769.6,373.9 1770.0,376.9 1770.3,377.9 1770.6,379.8 1771.0,407.9 1771.3,436.1 1771.6,428.4 1772.0,420.7 1772.3,413.0 1772.6,403.9 1772.9,394.8 1773.3,385.8 1773.6,376.7 1773.9,384.4 1774.3,392.1 1774.6,399.8 1774.9,408.0 1775.3,416.3 1775.6,424.5 1775.9,432.8 1776.2,472.3 1776.6,511.9 1776.9,541.1 1777.2,570.2 1777.6,599.3 1777.9,568.0 1778.2,536.7 1778.5,505.3 1778.8,500.9 1779.1,496.5 1779.4,492.1 1779.6,487.7 1779.9,483.3 1780.2,479.2 1780.5,478.8 1780.8,477.5 1781.1,478.6 1781.4,475.2 1781.6,473.7 1781.9,476.4 1782.2,473.4 1782.5,473.3 1782.8,478.9 1783.2,484.4 1783.5,489.9 1783.8,495.4 1784.2,533.9 1784.5,572.4 1784.8,610.9 1785.1,643.3 1785.5,675.7 1785.8,708.2 1786.1,708.2 1786.3,708.2 1786.6,708.2 1786.9,708.2 1787.2,708.2 1787.4,708.2 1787.7,708.2 1788.0,708.2 1788.2,708.2 1788.5,708.2 1788.8,708.2 1789.1,708.2 1789.3,708.2 1789.6,708.2 1789.9,708.2 1790.2,708.2 1790.4,708.2 1790.7,708.2 1791.0,708.2 1791.2,708.2 1791.5,708.2 1791.8,708.2 1792.1,708.2 1792.3,708.2 1792.6,708.2 1792.9,708.2 1793.1,708.2 1793.4,708.2 1793.7,708.2 1794.0,708.2 1794.2,708.2 1794.5,708.2 1794.8,708.2 1795.0,708.2 1795.4,692.5 1795.7,676.8 1796.0,654.8 1796.4,632.9 1796.7,610.9 1797.0,602.1 1797.3,593.3 1797.7,584.5 1798.0,580.1 1798.2,575.7 1798.5,571.3 1798.8,566.9 1799.1,562.5 1799.3,558.1 1799.6,554.6 1799.9,551.0 1800.2,547.5 1800.5,544.0 1800.7,540.4 1801.0,536.9 1801.3,533.4 1801.6,541.2 1802.0,549.0 1802.3,556.9 1802.6,564.3 1802.9,562.3 1803.2,560.5 1803.4,559.0 1803.7,556.3 1804.0,553.4 1804.3,551.5 1804.5,555.4 1804.8,559.2 1805.1,563.0 1805.4,566.9 1805.6,570.7 1805.9,574.6 1806.2,570.2 1806.5,565.8 1806.7,561.4 1807.0,557.0 1807.3,552.6 1807.6,548.2 1807.9,559.2 1808.2,570.2 1808.6,581.2 1808.9,572.1 1809.2,563.0 1809.6,554.0 1809.9,544.9 1810.2,572.9 1810.5,601.0 1810.9,629.0 1811.2,657.0 1811.5,644.7 1811.9,632.3 1812.2,619.9 1812.5,607.6 1812.8,586.7 1813.2,565.8 1813.5,544.9 1813.8,535.8 1814.2,526.8 1814.5,517.7 1814.8,508.8 1815.1,507.9 1815.4,507.5 1815.7,506.7 1815.9,505.2 1816.2,505.5 1816.5,505.0 1816.8,505.6 1817.0,508.4 1817.3,508.2 1817.6,508.7 1817.9,511.0 1818.1,511.9 1818.5,518.5 1818.8,525.1 1819.1,531.7 1819.4,538.3 1819.8,548.2 1820.1,558.1 1820.4,568.0 1820.8,577.9 1821.1,592.7 1821.4,607.6 1821.8,622.4 1822.1,637.3 1822.4,650.4 1822.7,663.6 1823.1,676.8 1823.4,690.0 1823.7,699.1 1824.1,708.2 1824.3,708.2 1824.6,708.2 1824.9,708.2 1825.1,708.2 1825.4,708.2 1825.7,708.2 1826.0,708.2 1826.2,708.2 1826.5,708.2 1826.8,708.2 1827.0,708.2 1827.3,708.2 1827.6,708.2 1827.8,708.2 1828.1,708.2 1828.4,708.2 1828.7,708.2 1828.9,708.2 1829.2,708.2 1829.5,708.2 1829.7,708.2 1830.0,708.2 1830.3,708.2 1830.6,708.2 1830.8,708.2 1831.1,708.2 1831.4,708.2 1831.6,708.2 1831.9,708.2 1832.2,708.2 1832.4,708.2 1832.7,708.2 1833.0,708.2 1833.3,708.2 1833.5,708.2 1833.8,708.2 1834.1,708.2 1834.3,708.2 1834.6,708.2 1834.9,708.2 1835.1,708.2 1835.4,708.2 1835.7,708.2 1836.0,708.2 1836.2,708.2 1836.5,708.2 1836.8,708.2 1837.0,708.2 1837.3,708.2 1837.6,708.2 1837.9,708.2 1838.1,708.2 1838.4,708.2 1838.7,708.2 1838.9,708.2 1839.2,708.2 1839.5,708.2 1839.7,708.2 1840.0,708.2 1840.3,708.2 1840.6,708.2 1840.9,700.7 1841.2,693.3 1841.5,676.8 1841.9,660.3 1842.2,643.9 1842.5,621.9 1842.9,599.9 1843.2,577.9 1843.5,561.4 1843.9,544.9 1844.2,528.4 1844.5,514.4 1844.8,500.4 1845.2,486.4 1845.5,472.3 1845.8,461.4 1846.2,450.4 1846.5,440.2 1846.8,438.4 1847.2,436.3 1847.4,439.0 1847.7,440.7 1848.0,442.9 1848.2,445.5 1848.5,448.2 1848.8,449.1 1849.1,450.0 1849.3,448.4 1849.6,448.2 1849.9,448.9 1850.2,448.6 1850.4,450.9 1850.8,445.6 1851.1,440.2 1851.4,434.8 1851.8,430.5 1852.1,428.8 1852.3,426.9 1852.6,426.8 1852.9,427.5 1853.2,425.7 1853.5,424.8 1853.7,425.0 1854.0,424.1 1854.3,426.4 1854.6,423.8 1854.8,427.4 1855.1,423.7 1855.4,427.2 1855.6,425.2 1855.9,426.6 1856.2,426.0 1856.5,423.5 1856.7,425.4 1857.0,422.8 1857.3,423.4 1857.5,423.9 1857.8,423.2 1858.1,424.9 1858.4,426.3 1858.6,423.0 1858.9,425.3 1859.2,422.1 1859.4,424.5 1859.7,422.6 1860.0,423.5 1860.2,421.3 1860.5,425.0 1860.8,422.0 1861.1,423.3 1861.3,423.9 1861.7,427.9 1862.0,432.0 1862.3,436.1 1862.7,470.7 1863.0,505.3 1863.3,531.7 1863.6,558.1 1863.9,561.4 1864.2,564.7 1864.5,568.0 1864.7,571.3 1865.0,574.6 1865.3,577.9 1865.6,597.7 1865.9,580.1 1866.3,562.5 1866.6,544.9 1866.9,528.4 1867.3,511.9 1867.6,495.1 1867.9,492.0 1868.3,487.9 1868.6,483.9 1868.9,488.8 1869.2,493.8 1869.6,498.9 1869.9,502.1 1870.1,504.4 1870.4,507.1 1870.7,511.3 1871.0,513.6 1871.2,516.9 1871.6,509.7 1871.9,502.6 1872.2,495.4 1872.5,482.2 1872.9,469.1 1873.2,456.8 1873.5,456.0 1873.9,453.8 1874.2,451.0 1874.5,453.3 1874.8,452.1 1875.1,450.1 1875.3,449.8 1875.6,451.3 1875.9,449.3 1876.2,453.3 1876.4,452.3 1876.7,452.9 1877.0,450.8 1877.3,453.5 1877.5,449.6 1877.8,452.6 1878.1,450.3 1878.4,449.0 1878.6,449.6 1878.9,449.9 1879.2,452.6 1879.5,450.6 1879.7,450.9 1880.0,451.4 1880.3,449.4 1880.6,451.0 1880.8,450.9 1881.1,451.8 1881.4,449.4 1881.7,450.9 1881.9,451.2 1882.2,449.9 1882.5,447.9 1882.8,449.9 1883.1,464.4 1883.4,478.9 1883.8,495.4 1884.1,511.9 1884.4,517.4 1884.7,522.9 1885.1,528.4 1885.4,523.5 1885.7,518.5 1886.1,513.6 1886.4,508.6 1886.7,499.6 1887.1,490.5 1887.4,481.4 1887.7,472.3 1888.0,466.2 1888.4,460.0 1888.7,453.8 1889.0,447.6 1889.4,454.6 1889.7,461.6 1890.0,468.6 1890.4,475.6 1890.7,480.6 1891.0,485.5 1891.3,490.5 1891.7,494.5 1892.0,494.1 1892.3,497.7 1892.5,495.1 1892.8,497.3 1893.1,497.3 1893.4,496.0 1893.7,497.1 1894.0,499.2 1894.3,502.1 1894.5,505.9 1894.8,509.2 1895.1,511.3 1895.4,515.5 1895.6,518.5 1896.0,533.4 1896.3,548.2 1896.6,563.0 1897.0,577.9 1897.3,583.9 1897.6,590.0 1897.9,596.0 1898.3,586.5 1898.6,577.1 1898.9,567.6 1899.3,558.1 1899.6,546.6 1899.9,535.0 1900.3,523.5 1900.6,511.9 1900.9,502.9 1901.2,493.8 1901.6,484.7 1901.9,475.6 1902.2,469.9 1902.6,464.1 1902.9,458.3 1903.2,451.6 1903.5,450.4 1903.8,448.4 1904.0,447.4 1904.3,444.6 1904.6,441.8 1904.9,440.4 1905.1,444.0 1905.4,447.7 1905.7,451.4 1906.0,455.1 1906.2,458.8 1906.5,462.5 1906.8,471.2 1907.2,480.0 1907.5,488.9 1907.8,492.2 1908.2,494.9 1908.5,498.5 1908.8,502.0 1909.2,516.3 1909.5,530.6 1909.8,544.9 1910.1,624.1 1910.5,677.5 1910.8,680.5 1911.0,682.9 1911.3,684.6 1911.6,688.8 1911.9,690.9 1912.2,694.3 1912.5,696.6 1912.8,702.4 1913.1,708.2 1913.4,708.2 1913.7,708.2 1913.9,708.2 1914.2,708.2 1914.5,708.2 1914.8,708.2 1915.0,708.2 1915.3,708.2 1915.6,708.2 1915.9,708.2 1916.1,708.2 1916.4,708.2 1916.7,681.8 1917.1,695.0 1917.4,708.2 1917.7,706.2 1918.0,704.3 1918.2,702.4 1918.5,700.5 1918.8,697.9 1919.1,695.1" fill="none" stroke="#1fe21f" stroke-width="1.35"/>
<path d="M1575.5 113V129" stroke="#1fe21f" stroke-width="1.2" fill="none"/>
<path d="M1738.5 380V396M1739.5 376V401M1740.5 379V399M1741.5 384V394" stroke="#1a1ad0" stroke-width="1" fill="none"/>
<path d="M1917.5 681V708" stroke="#1070a0" stroke-width="1.4" fill="none"/>
</g>
<g clip-path="url(#c2)">
<path d="M1247.5 953.2V958.8M1248.5 950.6V958.9M1249.5 947.3V957.7M1250.5 950.2V956.9M1251.5 947.7V957.7M1252.5 949.3V955.2M1253.5 941.3V957.1M1254.5 945.4V955.2M1255.5 942.4V956.9M1256.5 918.3V956.8M1257.5 947.8V956.0M1258.5 948.4V956.3M1259.5 950.3V957.5M1260.5 951.6V955.9M1261.5 945.9V957.6M1262.5 932.0V955.9M1263.5 900.6V955.6M1264.5 946.1V955.2M1265.5 945.8V953.4M1266.5 945.1V952.6M1267.5 944.0V952.9M1268.5 925.2V951.7M1269.5 889.4V950.4M1270.5 935.9V951.0M1271.5 938.7V950.5M1272.5 923.7V951.4M1273.5 892.6V950.1M1274.5 930.1V951.2M1275.5 932.4V952.8M1276.5 922.4V953.2M1277.5 921.9V953.1M1278.5 933.5V951.6M1279.5 923.4V951.3M1280.5 926.6V952.7M1281.5 923.8V952.3M1282.5 934.3V952.2M1283.5 912.8V954.4M1284.5 866.9V953.4M1285.5 913.0V953.8M1286.5 847.7V953.5M1287.5 924.0V956.1M1288.5 931.5V956.0M1289.5 925.2V956.6M1290.5 938.5V956.0M1291.5 933.7V956.8M1292.5 935.9V959.3M1293.5 935.8V957.9M1294.5 924.7V957.0M1295.5 941.4V956.6M1296.5 938.4V958.7M1297.5 935.5V957.6M1298.5 940.6V956.6M1299.5 941.8V956.8M1300.5 935.9V955.8M1301.5 935.3V956.4M1302.5 925.4V949.6M1303.5 929.3V942.8M1304.5 915.0V938.9M1305.5 922.2V938.8M1306.5 925.1V939.4M1307.5 924.5V941.9M1308.5 929.5V941.5M1309.5 925.4V941.8M1310.5 927.5V943.3M1311.5 934.9V945.2M1312.5 933.9V946.0M1313.5 935.6V944.0M1314.5 930.6V945.5M1315.5 933.3V946.5M1316.5 936.2V946.3M1317.5 936.8V945.9M1318.5 924.7V948.2M1319.5 891.0V948.0M1320.5 933.4V948.6M1321.5 938.4V948.0M1322.5 939.8V950.2M1323.5 935.0V950.5M1324.5 938.5V951.6M1325.5 940.5V950.6M1326.5 936.8V952.3M1327.5 941.3V953.9M1328.5 947.3V952.8M1329.5 946.5V954.1M1330.5 949.0V955.8M1331.5 946.7V954.2M1332.5 944.6V955.1M1333.5 951.7V957.1M1334.5 952.6V956.3M1335.5 952.3V955.8M1336.5 949.1V956.9M1337.5 951.3V957.8M1338.5 950.4V956.8M1339.5 950.7V956.1M1340.5 950.5V957.6M1341.5 952.0V957.4M1342.5 947.5V956.2M1343.5 951.3V956.6M1344.5 949.7V956.1M1345.5 950.4V955.8M1346.5 944.1V954.8M1347.5 946.4V955.8M1348.5 949.9V955.4M1349.5 947.5V956.4M1350.5 945.1V956.5M1351.5 950.0V954.3M1352.5 943.0V956.0M1353.5 947.7V955.5M1354.5 945.1V953.9M1355.5 941.4V952.7M1356.5 944.4V953.0M1357.5 936.8V950.8M1358.5 941.9V950.5M1359.5 941.6V949.4M1360.5 940.1V950.4M1361.5 940.4V950.5M1362.5 938.1V949.6M1363.5 936.3V947.8M1364.5 934.2V947.6M1365.5 939.8V949.1M1366.5 941.0V948.7M1367.5 941.3V949.5M1368.5 933.1V947.8M1369.5 936.7V948.6M1370.5 933.7V948.1M1371.5 932.8V949.1M1372.5 941.5V948.5M1373.5 938.9V948.5M1374.5 941.8V948.2M1375.5 934.3V949.3M1376.5 939.6V948.5M1377.5 932.6V946.7M1378.5 903.9V947.8M1379.5 933.0V946.6M1380.5 941.9V947.8M1381.5 943.1V947.3M1382.5 944.1V948.7M1383.5 938.7V948.1M1384.5 944.8V950.0M1385.5 943.3V950.5M1386.5 946.6V950.3M1387.5 914.2V950.9M1388.5 871.7V951.8M1389.5 935.1V951.7M1390.5 946.2V950.9M1391.5 946.9V951.8M1392.5 947.1V952.9M1393.5 948.2V952.3M1394.5 945.9V950.6M1395.5 949.0V952.0M1396.5 948.4V952.5M1397.5 948.4V953.3M1398.5 947.4V951.8M1399.5 947.9V953.7M1400.5 950.6V953.8M1401.5 950.4V953.3M1402.5 951.1V953.1M1403.5 948.6V952.2M1404.5 950.4V953.4M1405.5 950.5V952.5M1406.5 948.6V951.9M1407.5 949.7V953.3M1408.5 949.0V953.7M1409.5 947.8V953.2M1410.5 948.6V952.6M1411.5 945.1V952.9M1412.5 948.1V952.1M1413.5 947.6V952.3M1414.5 948.3V953.2M1415.5 950.1V952.2M1416.5 949.5V952.5M1417.5 949.6V951.6M1418.5 945.8V951.4M1419.5 947.4V950.7M1420.5 947.7V952.1M1421.5 946.1V950.9M1422.5 946.1V951.1M1423.5 934.1V950.1M1424.5 911.9V949.9M1425.5 938.4V949.5M1426.5 938.7V949.3M1427.5 920.7V948.0M1428.5 847.7V948.9M1429.5 912.5V948.8M1430.5 936.4V946.8M1431.5 932.0V949.1M1432.5 936.7V948.1M1433.5 940.9V948.6M1434.5 938.0V949.2M1435.5 941.6V947.4M1436.5 941.2V949.4M1437.5 941.5V947.9M1438.5 938.5V948.4M1439.5 941.4V949.1M1440.5 938.7V949.4M1441.5 939.7V948.8M1442.5 940.3V949.4M1443.5 942.9V949.8M1444.5 941.8V949.4M1445.5 935.7V950.8M1446.5 942.8V950.4M1447.5 938.9V950.4M1448.5 943.0V951.9M1449.5 940.1V950.7M1450.5 937.2V950.4M1451.5 941.3V952.0M1452.5 936.4V951.1M1453.5 936.1V951.6M1454.5 936.3V951.9M1455.5 942.5V951.7M1456.5 941.3V953.2M1457.5 942.1V953.8M1458.5 942.0V953.0M1459.5 943.5V954.4M1460.5 944.2V953.8M1461.5 946.4V953.3M1462.5 947.2V952.7M1463.5 946.7V952.5M1464.5 944.6V953.7M1465.5 947.1V954.2M1466.5 946.5V954.2M1467.5 947.7V954.1M1468.5 943.5V952.8M1469.5 945.1V954.0M1470.5 942.3V952.9M1471.5 940.2V953.7M1472.5 943.0V954.0M1473.5 948.0V952.3M1474.5 936.8V951.9M1475.5 900.6V953.3M1476.5 941.9V954.0M1477.5 945.1V953.7M1478.5 948.5V952.4M1479.5 947.1V952.6M1480.5 922.4V953.5M1481.5 865.3V952.3M1482.5 935.1V953.8M1483.5 913.5V954.0M1484.5 941.5V953.2M1485.5 931.6V952.9M1486.5 887.8V953.7M1487.5 939.0V952.5M1488.5 941.6V952.6M1489.5 948.3V953.0M1490.5 947.9V951.4M1491.5 945.8V951.1M1492.5 942.1V952.1M1493.5 945.9V952.5M1494.5 946.8V952.8M1495.5 947.3V952.8M1496.5 946.9V953.1M1497.5 947.4V951.4M1498.5 947.0V952.0M1499.5 947.6V950.6M1500.5 947.2V951.0M1501.5 946.4V952.6M1502.5 944.9V952.3M1503.5 944.4V951.9M1504.5 944.1V952.2M1505.5 945.5V950.8M1506.5 945.2V951.4M1507.5 940.9V951.9M1508.5 946.8V951.0M1509.5 944.9V950.5M1510.5 942.3V951.4M1511.5 946.5V952.3M1512.5 946.5V951.5M1513.5 945.2V952.2M1514.5 942.7V950.6M1515.5 945.7V951.2M1516.5 946.2V950.5M1517.5 945.9V950.2M1518.5 945.1V951.7M1519.5 936.9V951.1M1520.5 942.1V951.0M1521.5 943.0V949.4M1522.5 941.1V948.3M1523.5 938.3V948.6M1524.5 940.3V949.9M1525.5 941.2V948.4M1526.5 931.4V949.9M1527.5 892.6V950.5M1528.5 931.8V950.0M1529.5 943.4V950.8M1530.5 942.2V949.2M1531.5 944.8V950.7M1532.5 944.1V951.7M1533.5 945.6V949.8M1534.5 944.2V949.5M1535.5 944.5V950.2M1536.5 942.8V951.2M1537.5 942.9V950.9M1538.5 943.7V951.4M1539.5 941.9V949.7M1540.5 941.7V948.9M1541.5 942.3V950.7M1542.5 938.9V950.5M1543.5 941.3V948.4M1544.5 937.1V948.8M1545.5 939.5V950.2M1546.5 917.9V950.4M1547.5 871.7V948.7M1548.5 921.9V948.3M1549.5 940.3V950.0M1550.5 940.6V950.6M1551.5 941.5V949.9M1552.5 934.1V949.5M1553.5 937.6V949.2M1554.5 910.2V950.5M1555.5 863.1V951.0M1556.5 932.1V950.1M1557.5 934.5V950.0M1558.5 936.4V949.2M1559.5 938.6V951.5M1560.5 935.7V950.1M1561.5 943.6V949.7M1562.5 944.7V949.4M1563.5 942.4V951.3M1564.5 943.0V950.1M1565.5 944.8V950.0M1566.5 937.0V951.2M1567.5 938.8V950.6M1568.5 943.0V950.3M1569.5 942.8V949.4M1570.5 941.6V951.9M1571.5 942.1V950.2M1572.5 940.7V951.8M1573.5 941.3V951.0M1574.5 944.6V950.1M1575.5 939.5V950.9M1576.5 943.0V950.0M1577.5 937.5V950.7M1578.5 939.3V950.0M1579.5 940.3V951.5M1580.5 942.5V951.4M1581.5 942.9V951.0M1582.5 936.7V951.1M1583.5 942.5V950.6M1584.5 940.1V951.9M1585.5 943.1V950.6M1586.5 943.0V949.7M1587.5 942.0V951.1M1588.5 939.6V952.0M1589.5 940.0V952.1M1590.5 937.0V952.0M1591.5 943.6V950.9M1592.5 934.7V950.9M1593.5 944.2V950.5M1594.5 937.9V951.6M1595.5 937.2V951.6M1596.5 941.6V951.4M1597.5 941.4V950.8M1598.5 945.5V952.0M1599.5 939.5V952.4M1600.5 943.6V952.9M1601.5 943.2V952.5M1602.5 945.9V952.3M1603.5 923.4V953.5M1604.5 887.8V951.7M1605.5 934.1V951.1M1606.5 945.5V953.0M1607.5 946.2V953.2M1608.5 945.0V953.2M1609.5 945.3V952.7M1610.5 941.7V954.1M1611.5 942.2V952.8M1612.5 944.2V951.8M1613.5 941.1V953.7M1614.5 941.6V954.4M1615.5 946.4V952.0M1616.5 946.5V954.0M1617.5 938.4V952.9M1618.5 921.5V953.6M1619.5 946.8V952.0M1620.5 946.8V954.1M1621.5 948.3V952.3M1622.5 948.2V954.7M1623.5 948.7V953.4M1624.5 934.0V952.4M1625.5 891.0V953.7M1626.5 942.8V954.0M1627.5 942.0V954.1M1628.5 944.1V953.3M1629.5 945.5V953.6M1630.5 947.5V953.0M1631.5 941.4V951.4M1632.5 947.3V952.0M1633.5 944.3V952.2M1634.5 945.9V952.2M1635.5 921.5V950.6M1636.5 878.2V951.3M1637.5 933.8V952.0M1638.5 946.4V951.0M1639.5 947.2V950.2M1640.5 945.6V951.5M1641.5 942.0V951.2M1642.5 946.3V949.9M1643.5 942.1V950.3M1644.5 942.3V949.5M1645.5 945.7V948.6M1646.5 942.6V950.3M1647.5 943.7V948.1M1648.5 944.3V948.1M1649.5 938.8V948.9M1650.5 944.2V948.5M1651.5 939.5V948.7M1652.5 942.4V948.6M1653.5 942.3V948.6M1654.5 943.2V948.9M1655.5 942.9V948.5M1656.5 941.3V949.4M1657.5 941.7V950.1M1658.5 939.4V948.4M1659.5 934.9V948.7M1660.5 941.8V950.3M1661.5 937.3V948.1M1662.5 942.3V949.7M1663.5 942.3V950.5M1664.5 941.5V949.2M1665.5 943.8V949.5M1666.5 903.3V948.5M1667.5 792.5V949.9M1668.5 915.2V950.0M1669.5 937.8V950.9M1670.5 923.4V948.6M1671.5 873.4V950.1M1672.5 933.5V950.0M1673.5 945.4V951.3M1674.5 941.7V951.6M1675.5 945.9V950.6M1676.5 942.9V953.0M1677.5 947.2V954.2M1678.5 944.0V954.2M1679.5 947.6V954.9M1680.5 940.6V955.9M1681.5 948.4V955.7M1682.5 946.8V956.8M1683.5 948.8V957.4M1684.5 947.5V955.9M1685.5 946.6V955.7M1686.5 948.3V956.4M1687.5 944.6V956.0M1688.5 949.1V958.7M1689.5 943.5V956.8M1690.5 944.8V957.7M1691.5 948.6V958.4M1692.5 946.7V957.6M1693.5 948.0V960.4M1694.5 948.8V958.7M1695.5 944.4V959.8M1696.5 941.3V958.0M1697.5 937.5V958.9M1698.5 945.1V957.7M1699.5 945.0V956.7M1700.5 947.2V955.9M1701.5 944.6V957.4M1702.5 948.3V955.7M1703.5 947.0V956.9M1704.5 949.3V955.7M1705.5 946.3V955.6M1706.5 941.3V956.5M1707.5 942.2V953.8M1708.5 948.8V953.3M1709.5 946.8V953.4M1710.5 947.2V953.4M1711.5 947.8V954.9M1712.5 947.7V955.6M1713.5 950.4V953.9M1714.5 943.9V954.3M1715.5 949.7V955.4M1716.5 942.7V955.6M1717.5 943.9V954.0M1718.5 947.1V955.3M1719.5 948.0V955.5M1720.5 945.5V954.0M1721.5 949.3V953.5M1722.5 949.1V953.4M1723.5 943.2V955.2M1724.5 948.6V954.3M1725.5 947.4V953.2M1726.5 949.7V953.2M1727.5 942.7V955.7M1728.5 947.8V955.3M1729.5 944.3V954.4M1730.5 944.6V953.9M1731.5 943.9V955.3M1732.5 947.9V953.4M1733.5 942.9V953.6M1734.5 948.5V955.8M1735.5 920.9V953.8M1736.5 856.3V949.8M1737.5 923.5V949.8M1738.5 932.2V951.8M1739.5 856.3V951.1M1740.5 879.8V949.4M1741.5 899.0V949.5M1742.5 918.3V949.6M1743.5 939.1V949.9M1744.5 941.7V950.8M1745.5 942.1V952.0M1746.5 936.1V949.4M1747.5 941.9V949.3M1748.5 930.9V950.9M1749.5 934.2V951.5M1750.5 942.5V951.5M1751.5 940.9V952.0M1752.5 943.1V950.6M1753.5 937.9V951.7M1754.5 936.1V951.1M1755.5 937.4V952.3M1756.5 944.6V951.8M1757.5 945.4V951.8M1758.5 938.9V952.6M1759.5 940.5V950.7M1760.5 948.0V953.2M1761.5 947.3V952.6M1762.5 947.9V951.2M1763.5 947.0V953.1M1764.5 949.2V953.1M1765.5 948.2V952.9M1766.5 949.4V952.3M1767.5 948.0V951.2M1768.5 947.9V953.2M1769.5 949.0V953.3M1770.5 942.6V952.5M1771.5 945.6V952.0M1772.5 947.1V952.8M1773.5 947.8V952.7M1774.5 944.9V954.3M1775.5 948.4V953.9M1776.5 944.1V953.0M1777.5 947.6V953.4M1778.5 945.0V952.9M1779.5 949.4V953.4M1780.5 943.3V954.7M1781.5 949.1V954.2M1782.5 949.7V954.0M1783.5 949.4V954.5M1784.5 945.9V954.5M1785.5 940.5V955.4M1786.5 923.8V956.9M1787.5 938.0V958.1M1788.5 936.9V956.1M1789.5 929.4V957.9M1790.5 932.0V957.7M1791.5 933.5V956.9M1792.5 936.6V957.0M1793.5 930.8V957.8M1794.5 933.7V957.8M1795.5 930.2V956.8M1796.5 926.0V955.8M1797.5 925.7V956.1M1798.5 932.1V957.1M1799.5 921.1V955.6M1800.5 933.1V958.0M1801.5 933.4V956.8M1802.5 939.3V954.1M1803.5 945.2V954.8M1804.5 935.5V953.6M1805.5 941.2V952.8M1806.5 942.8V953.3M1807.5 942.1V952.9M1808.5 945.3V954.7M1809.5 943.7V954.3M1810.5 939.8V953.8M1811.5 924.7V953.2M1812.5 944.7V953.8M1813.5 944.5V954.4M1814.5 936.4V952.8M1815.5 942.4V953.9M1816.5 943.3V953.7M1817.5 941.7V954.7M1818.5 942.8V954.1M1819.5 939.2V953.3M1820.5 941.4V955.0M1821.5 940.2V953.4M1822.5 921.5V953.2M1823.5 942.8V954.1M1824.5 933.2V953.3M1825.5 945.3V953.7M1826.5 944.4V955.8M1827.5 939.6V955.8M1828.5 941.6V955.5M1829.5 943.8V954.6M1830.5 939.4V954.9M1831.5 944.5V955.6M1832.5 942.4V956.1M1833.5 942.0V956.8M1834.5 941.9V955.8M1835.5 943.9V956.6M1836.5 942.5V956.6M1837.5 943.6V955.8M1838.5 941.7V958.2M1839.5 941.1V957.8M1840.5 944.3V957.1M1841.5 945.7V959.0M1842.5 948.3V958.2M1843.5 943.1V958.2M1844.5 949.6V957.5M1845.5 943.3V956.3M1846.5 924.7V958.1M1847.5 951.0V956.2M1848.5 949.1V954.2M1849.5 951.9V954.7M1850.5 951.0V954.4M1851.5 948.9V955.2M1852.5 948.9V955.2M1853.5 950.5V955.5M1854.5 950.8V953.8M1855.5 950.1V954.9M1856.5 950.1V953.8M1857.5 947.7V955.1M1858.5 948.7V954.2M1859.5 950.3V953.8M1860.5 950.6V952.9M1861.5 950.2V954.9M1862.5 947.3V953.5M1863.5 941.1V949.9M1864.5 925.4V947.0M1865.5 922.6V945.2M1866.5 916.2V942.1M1867.5 912.7V941.0M1868.5 925.3V939.8M1869.5 923.5V940.5M1870.5 911.1V938.1M1871.5 863.1V938.5M1872.5 913.1V936.5M1873.5 927.1V936.4M1874.5 931.0V937.6M1875.5 931.4V941.0M1876.5 935.0V943.1M1877.5 936.8V944.7M1878.5 938.5V947.5M1879.5 938.6V947.2M1880.5 934.6V945.0M1881.5 916.6V939.3M1882.5 857.9V935.3M1883.5 914.0V931.7M1884.5 879.8V932.7M1885.5 918.1V931.3M1886.5 914.9V933.8M1887.5 892.6V933.6M1888.5 912.2V934.2M1889.5 831.6V935.5M1890.5 910.6V937.7M1891.5 931.7V944.2M1892.5 941.3V948.4M1893.5 946.8V951.9M1894.5 944.8V953.3M1895.5 938.8V953.4M1896.5 938.1V951.2M1897.5 944.2V951.1M1898.5 944.1V952.3M1899.5 946.1V952.2M1900.5 946.5V952.9M1901.5 937.9V952.1M1902.5 945.2V951.4M1903.5 946.4V950.4M1904.5 940.1V951.6M1905.5 943.3V950.1M1906.5 944.0V950.0M1907.5 945.4V951.7M1908.5 945.9V949.7M1909.5 939.8V951.4M1910.5 918.3V949.2M1911.5 938.0V947.5M1912.5 939.1V946.7M1913.5 935.8V945.5M1914.5 932.8V944.3M1915.5 923.7V945.0M1916.5 923.8V941.2M1917.5 913.7V936.7M1918.5 911.8V934.4" stroke="#1212c8" stroke-width="1" fill="none" shape-rendering="crispEdges"/>
<path d="M1247.5 942.3V953.2M1248.5 941.5V953.0M1249.5 945.6V954.7M1250.5 948.0V952.8M1251.5 945.4V953.4M1252.5 939.3V951.2M1253.5 939.8V951.6M1254.5 945.6V951.9M1255.5 937.9V953.0M1256.5 944.2V952.2M1257.5 946.7V951.6M1258.5 943.8V952.7M1259.5 948.0V953.0M1260.5 947.4V952.8M1261.5 949.5V952.9M1262.5 947.7V953.5M1263.5 941.1V952.2M1264.5 943.6V952.2M1265.5 942.3V951.8M1266.5 940.2V952.1M1267.5 940.2V949.9M1268.5 929.4V949.6M1269.5 936.1V950.0M1270.5 918.3V948.1M1271.5 935.3V947.9M1272.5 937.1V949.7M1273.5 930.7V949.6M1274.5 936.2V950.2M1275.5 921.0V950.4M1276.5 870.1V949.9M1277.5 919.1V949.8M1278.5 927.1V949.7M1279.5 925.2V950.6M1280.5 905.5V950.5M1281.5 927.1V949.8M1282.5 925.5V950.3M1283.5 899.0V950.7M1284.5 932.3V950.6M1285.5 917.0V950.9M1286.5 933.1V951.3M1287.5 932.0V954.0M1288.5 916.4V953.3M1289.5 917.5V953.5M1290.5 921.1V955.8M1291.5 921.5V955.2M1292.5 923.6V955.0M1293.5 922.7V957.0M1294.5 923.1V955.8M1295.5 923.7V955.6M1296.5 926.5V954.1M1297.5 925.8V956.2M1298.5 926.8V954.2M1299.5 927.5V955.8M1300.5 927.9V955.2M1301.5 927.2V954.6M1302.5 918.8V948.4M1303.5 921.6V940.9M1304.5 920.2V936.1M1305.5 905.5V938.2M1306.5 868.5V938.7M1307.5 917.2V938.9M1308.5 925.7V938.1M1309.5 926.1V940.2M1310.5 917.0V941.1M1311.5 923.0V941.8M1312.5 926.4V943.6M1313.5 929.4V943.8M1314.5 933.7V942.6M1315.5 932.9V945.0M1316.5 933.9V945.1M1317.5 935.5V946.1M1318.5 918.3V946.2M1319.5 933.3V945.3M1320.5 936.8V947.6M1321.5 937.0V946.4M1322.5 939.2V947.0M1323.5 939.5V947.7M1324.5 939.7V947.9M1325.5 939.5V950.3M1326.5 940.6V951.0M1327.5 941.0V949.4M1328.5 943.8V950.1M1329.5 946.4V952.6M1330.5 946.5V953.2M1331.5 945.3V952.6M1332.5 948.1V954.0M1333.5 939.7V953.2M1334.5 924.7V955.1M1335.5 947.6V953.2M1336.5 949.2V954.3M1337.5 945.2V954.3M1338.5 946.9V953.0M1339.5 942.3V953.7M1340.5 948.7V955.3M1341.5 947.7V954.2M1342.5 948.2V955.1M1343.5 946.7V953.2M1344.5 942.8V953.0M1345.5 946.3V953.9M1346.5 945.0V953.8M1347.5 947.1V953.2M1348.5 939.6V952.7M1349.5 945.5V954.0M1350.5 947.5V952.8M1351.5 942.1V953.7M1352.5 942.8V952.1M1353.5 944.9V951.8M1354.5 945.3V952.6M1355.5 944.4V951.1M1356.5 942.4V950.1M1357.5 939.8V948.7M1358.5 938.7V949.0M1359.5 938.7V948.7M1360.5 938.4V948.8M1361.5 938.3V946.0M1362.5 931.6V948.0M1363.5 915.1V946.6M1364.5 933.1V947.5M1365.5 936.2V946.2M1366.5 935.2V947.6M1367.5 928.8V947.5M1368.5 934.5V945.4M1369.5 929.5V946.1M1370.5 910.3V946.5M1371.5 931.8V945.5M1372.5 936.1V945.1M1373.5 938.2V944.7M1374.5 933.0V946.7M1375.5 936.7V944.5M1376.5 938.6V946.4M1377.5 934.1V945.1M1378.5 936.0V945.2M1379.5 939.1V944.7M1380.5 938.7V944.2M1381.5 933.0V947.0M1382.5 936.7V947.5M1383.5 937.5V947.9M1384.5 940.6V946.4M1385.5 943.4V948.8M1386.5 944.3V947.3M1387.5 927.8V948.4M1388.5 905.5V948.0M1389.5 933.5V948.7M1390.5 942.3V948.4M1391.5 945.4V948.5M1392.5 943.1V949.9M1393.5 945.2V949.0M1394.5 946.1V948.8M1395.5 945.9V949.1M1396.5 942.0V949.2M1397.5 947.2V950.3M1398.5 947.2V951.0M1399.5 948.1V950.9M1400.5 944.9V950.4M1401.5 946.3V950.7M1402.5 947.6V949.6M1403.5 947.4V950.8M1404.5 947.7V950.7M1405.5 947.1V950.9M1406.5 946.1V950.6M1407.5 945.6V950.0M1408.5 944.5V949.4M1409.5 947.2V949.3M1410.5 947.5V951.4M1411.5 946.3V951.0M1412.5 947.1V950.5M1413.5 944.1V949.8M1414.5 946.6V949.1M1415.5 947.1V951.4M1416.5 946.1V950.7M1417.5 942.0V949.8M1418.5 944.0V950.4M1419.5 906.2V950.1M1420.5 836.4V947.8M1421.5 929.7V948.5M1422.5 942.3V947.1M1423.5 942.0V947.8M1424.5 939.7V948.3M1425.5 939.7V947.2M1426.5 932.9V947.0M1427.5 938.7V947.0M1428.5 938.7V946.6M1429.5 930.1V945.8M1430.5 936.5V945.9M1431.5 934.2V946.3M1432.5 939.1V945.2M1433.5 937.8V945.7M1434.5 936.4V945.3M1435.5 938.2V946.4M1436.5 938.8V945.4M1437.5 935.4V947.4M1438.5 936.7V947.7M1439.5 938.9V947.1M1440.5 932.5V948.2M1441.5 939.3V948.1M1442.5 933.5V948.5M1443.5 939.7V947.9M1444.5 935.4V948.2M1445.5 939.1V948.1M1446.5 934.8V948.0M1447.5 940.0V948.3M1448.5 940.0V948.0M1449.5 940.7V949.3M1450.5 938.9V949.6M1451.5 941.7V949.4M1452.5 937.7V948.5M1453.5 940.8V950.5M1454.5 940.8V948.7M1455.5 941.4V949.1M1456.5 934.7V950.5M1457.5 895.8V949.3M1458.5 931.7V950.5M1459.5 936.2V951.2M1460.5 943.2V952.1M1461.5 943.6V952.4M1462.5 942.2V951.3M1463.5 945.4V952.3M1464.5 943.7V952.1M1465.5 944.6V952.7M1466.5 941.2V951.8M1467.5 942.7V951.9M1468.5 938.6V950.5M1469.5 943.0V952.5M1470.5 945.2V951.5M1471.5 943.5V951.1M1472.5 944.9V951.6M1473.5 944.5V951.4M1474.5 943.7V952.0M1475.5 937.2V950.9M1476.5 945.5V950.6M1477.5 940.0V951.6M1478.5 945.7V950.5M1479.5 939.9V949.6M1480.5 942.0V950.5M1481.5 944.8V950.9M1482.5 941.0V951.5M1483.5 943.7V950.6M1484.5 939.8V950.4M1485.5 939.3V949.2M1486.5 943.2V949.1M1487.5 944.5V950.3M1488.5 943.0V949.6M1489.5 939.9V950.2M1490.5 942.9V949.9M1491.5 944.2V951.0M1492.5 945.1V950.7M1493.5 939.6V950.4M1494.5 943.0V951.0M1495.5 939.0V948.9M1496.5 941.9V949.2M1497.5 945.6V950.8M1498.5 943.3V948.9M1499.5 938.6V948.7M1500.5 943.6V948.9M1501.5 943.7V949.1M1502.5 944.9V948.7M1503.5 941.9V950.3M1504.5 941.7V948.4M1505.5 941.0V948.7M1506.5 944.3V949.9M1507.5 937.0V948.4M1508.5 942.7V949.4M1509.5 939.8V948.1M1510.5 938.5V948.0M1511.5 939.9V949.8M1512.5 941.1V948.8M1513.5 944.5V948.7M1514.5 943.4V949.7M1515.5 937.4V947.3M1516.5 940.7V949.5M1517.5 942.2V947.1M1518.5 938.1V947.9M1519.5 939.9V947.2M1520.5 938.9V946.8M1521.5 938.9V947.0M1522.5 924.7V946.4M1523.5 932.4V947.0M1524.5 936.2V946.9M1525.5 938.3V946.3M1526.5 937.3V946.8M1527.5 933.9V946.6M1528.5 938.9V946.2M1529.5 941.0V948.5M1530.5 937.7V948.4M1531.5 934.2V948.6M1532.5 942.2V948.1M1533.5 940.7V949.6M1534.5 939.7V948.8M1535.5 939.5V947.6M1536.5 939.5V947.2M1537.5 942.4V948.3M1538.5 941.2V947.0M1539.5 939.2V948.7M1540.5 936.7V947.9M1541.5 940.7V948.1M1542.5 935.8V947.6M1543.5 939.7V947.4M1544.5 937.8V946.7M1545.5 936.7V946.4M1546.5 934.8V947.9M1547.5 936.4V947.7M1548.5 924.7V947.4M1549.5 939.3V947.2M1550.5 928.5V948.1M1551.5 929.1V946.1M1552.5 938.6V946.0M1553.5 936.3V948.1M1554.5 939.2V946.5M1555.5 938.3V947.8M1556.5 939.8V947.6M1557.5 931.3V947.3M1558.5 941.1V948.7M1559.5 941.9V949.1M1560.5 935.8V949.0M1561.5 900.6V948.8M1562.5 936.5V949.5M1563.5 939.4V948.3M1564.5 939.9V948.6M1565.5 933.1V947.2M1566.5 939.5V948.3M1567.5 942.2V948.9M1568.5 941.7V948.6M1569.5 936.5V948.1M1570.5 938.6V949.4M1571.5 933.1V947.1M1572.5 940.0V949.2M1573.5 940.0V948.7M1574.5 941.1V947.7M1575.5 933.6V948.6M1576.5 934.3V947.5M1577.5 939.2V948.8M1578.5 933.3V948.1M1579.5 941.2V948.4M1580.5 935.1V949.1M1581.5 941.1V949.4M1582.5 935.4V948.9M1583.5 940.3V947.9M1584.5 939.9V948.1M1585.5 937.5V949.8M1586.5 941.1V948.7M1587.5 939.3V949.6M1588.5 940.4V947.7M1589.5 939.0V949.6M1590.5 933.0V948.9M1591.5 937.3V949.1M1592.5 941.0V950.3M1593.5 929.3V948.8M1594.5 905.5V948.9M1595.5 940.4V949.3M1596.5 932.8V949.2M1597.5 940.6V949.1M1598.5 941.9V950.8M1599.5 941.8V949.7M1600.5 939.4V949.6M1601.5 935.6V949.1M1602.5 941.9V950.2M1603.5 941.5V949.6M1604.5 934.6V951.2M1605.5 935.5V950.3M1606.5 939.5V950.4M1607.5 940.8V949.5M1608.5 943.7V949.2M1609.5 942.5V949.4M1610.5 940.5V951.1M1611.5 943.2V950.8M1612.5 937.9V950.5M1613.5 936.5V950.6M1614.5 938.6V951.2M1615.5 945.5V949.8M1616.5 945.0V950.1M1617.5 944.5V951.0M1618.5 942.4V951.6M1619.5 939.3V950.2M1620.5 942.6V950.3M1621.5 942.8V952.6M1622.5 945.9V951.0M1623.5 945.1V950.1M1624.5 946.0V951.4M1625.5 946.5V952.0M1626.5 939.0V952.5M1627.5 945.0V951.6M1628.5 944.6V949.7M1629.5 944.7V950.3M1630.5 941.9V949.9M1631.5 945.2V950.5M1632.5 943.1V950.1M1633.5 942.4V950.7M1634.5 945.7V949.6M1635.5 938.1V949.3M1636.5 944.2V949.9M1637.5 944.1V949.5M1638.5 942.3V947.6M1639.5 937.8V947.2M1640.5 941.9V947.6M1641.5 942.3V946.8M1642.5 940.5V946.8M1643.5 937.6V947.2M1644.5 943.2V946.6M1645.5 941.5V948.5M1646.5 939.5V945.9M1647.5 942.9V947.7M1648.5 939.0V947.5M1649.5 941.2V947.8M1650.5 938.6V947.0M1651.5 942.3V947.5M1652.5 935.1V948.0M1653.5 934.8V948.1M1654.5 939.3V946.8M1655.5 939.4V947.5M1656.5 940.4V947.3M1657.5 921.5V947.1M1658.5 939.7V948.1M1659.5 940.6V946.3M1660.5 935.8V945.6M1661.5 932.4V945.9M1662.5 939.3V946.2M1663.5 940.5V946.0M1664.5 939.1V947.0M1665.5 939.9V947.1M1666.5 938.7V946.8M1667.5 938.6V948.7M1668.5 938.8V946.2M1669.5 941.3V948.9M1670.5 938.6V946.9M1671.5 942.4V949.0M1672.5 943.0V948.0M1673.5 931.8V946.8M1674.5 903.9V947.6M1675.5 935.6V947.8M1676.5 911.9V947.1M1677.5 939.9V947.5M1678.5 943.9V947.8M1679.5 944.6V950.0M1680.5 941.9V949.3M1681.5 936.9V950.1M1682.5 945.0V950.8M1683.5 942.7V950.4M1684.5 939.6V950.1M1685.5 943.5V951.4M1686.5 944.6V949.7M1687.5 940.9V952.4M1688.5 940.6V952.1M1689.5 940.2V952.4M1690.5 934.4V953.4M1691.5 935.6V951.3M1692.5 935.6V951.8M1693.5 933.0V953.5M1694.5 936.6V952.7M1695.5 936.4V951.3M1696.5 936.3V951.2M1697.5 936.9V951.1M1698.5 937.3V951.5M1699.5 937.6V952.2M1700.5 938.9V950.2M1701.5 936.9V950.2M1702.5 939.8V949.4M1703.5 938.8V950.6M1704.5 943.1V948.9M1705.5 941.2V949.1M1706.5 939.7V949.8M1707.5 943.6V949.8M1708.5 942.1V948.4M1709.5 942.6V948.6M1710.5 945.1V948.9M1711.5 944.9V949.5M1712.5 941.3V949.2M1713.5 944.9V948.5M1714.5 944.8V948.8M1715.5 944.4V949.6M1716.5 944.8V949.8M1717.5 944.9V948.6M1718.5 944.5V947.6M1719.5 941.3V949.1M1720.5 943.9V947.3M1721.5 939.8V949.5M1722.5 945.0V948.3M1723.5 942.7V949.8M1724.5 943.8V949.1M1725.5 942.8V949.7M1726.5 939.9V949.5M1727.5 939.3V948.5M1728.5 940.2V948.0M1729.5 943.9V947.1M1730.5 942.7V949.7M1731.5 942.2V948.9M1732.5 941.2V949.2M1733.5 942.3V948.9M1734.5 941.1V947.5M1735.5 943.5V947.7M1736.5 940.3V947.5M1737.5 941.2V948.4M1738.5 943.1V948.6M1739.5 934.5V949.6M1740.5 936.4V949.4M1741.5 932.5V949.6M1742.5 908.7V949.7M1743.5 936.8V948.2M1744.5 940.2V947.1M1745.5 939.5V948.3M1746.5 935.8V949.2M1747.5 936.3V947.2M1748.5 937.6V949.2M1749.5 933.3V947.7M1750.5 938.4V948.2M1751.5 937.8V947.7M1752.5 932.7V949.7M1753.5 933.8V949.9M1754.5 937.0V949.0M1755.5 942.0V950.2M1756.5 943.8V948.5M1757.5 941.3V948.2M1758.5 940.9V949.3M1759.5 939.5V949.2M1760.5 944.1V950.6M1761.5 943.6V950.5M1762.5 943.8V951.2M1763.5 945.0V951.3M1764.5 945.1V951.0M1765.5 943.7V949.0M1766.5 945.9V950.9M1767.5 945.5V949.8M1768.5 947.2V950.9M1769.5 944.0V949.3M1770.5 942.9V949.8M1771.5 942.5V949.8M1772.5 940.1V951.4M1773.5 939.6V950.6M1774.5 946.9V949.7M1775.5 944.8V950.1M1776.5 943.8V950.1M1777.5 945.9V951.6M1778.5 944.9V951.7M1779.5 946.5V950.1M1780.5 946.9V951.7M1781.5 946.9V950.4M1782.5 942.8V951.7M1783.5 945.2V951.4M1784.5 939.2V953.4M1785.5 927.7V952.5M1786.5 919.7V955.3M1787.5 919.0V955.0M1788.5 916.9V955.2M1789.5 920.4V955.0M1790.5 919.9V955.6M1791.5 908.7V954.5M1792.5 921.2V955.9M1793.5 920.6V954.0M1794.5 917.9V954.1M1795.5 920.6V954.6M1796.5 920.9V953.7M1797.5 921.6V953.8M1798.5 900.6V954.2M1799.5 921.4V954.0M1800.5 921.0V955.5M1801.5 931.6V954.8M1802.5 939.5V951.7M1803.5 935.5V952.6M1804.5 937.9V951.7M1805.5 934.1V950.6M1806.5 941.6V952.3M1807.5 936.4V952.3M1808.5 933.3V952.1M1809.5 941.6V950.8M1810.5 941.2V951.3M1811.5 936.5V950.8M1812.5 933.8V950.9M1813.5 942.3V952.6M1814.5 939.2V952.6M1815.5 940.6V950.9M1816.5 939.3V950.6M1817.5 934.9V950.8M1818.5 942.6V950.7M1819.5 942.2V950.8M1820.5 942.3V952.4M1821.5 943.2V952.0M1822.5 933.7V950.4M1823.5 932.7V952.4M1824.5 932.7V951.1M1825.5 932.6V952.8M1826.5 933.1V951.2M1827.5 934.1V953.0M1828.5 933.7V951.4M1829.5 932.0V952.2M1830.5 933.2V951.7M1831.5 933.5V952.2M1832.5 933.2V954.0M1833.5 933.6V953.6M1834.5 932.7V954.8M1835.5 933.1V953.0M1836.5 932.6V954.7M1837.5 933.0V954.3M1838.5 930.5V954.1M1839.5 931.9V955.5M1840.5 932.2V954.1M1841.5 933.5V955.2M1842.5 943.8V954.4M1843.5 938.2V954.0M1844.5 944.5V953.8M1845.5 948.9V953.4M1846.5 948.6V955.6M1847.5 946.0V952.6M1848.5 941.5V953.4M1849.5 947.4V952.9M1850.5 947.3V952.7M1851.5 948.1V951.8M1852.5 944.6V951.8M1853.5 947.4V952.4M1854.5 948.5V952.6M1855.5 947.6V951.4M1856.5 946.8V951.5M1857.5 944.9V951.6M1858.5 947.9V951.7M1859.5 945.8V949.6M1860.5 946.3V949.5M1861.5 947.4V950.7M1862.5 944.2V949.7M1863.5 939.3V948.1M1864.5 926.7V945.2M1865.5 866.9V943.2M1866.5 892.6V941.5M1867.5 924.2V940.7M1868.5 923.1V938.6M1869.5 925.1V938.1M1870.5 923.4V937.5M1871.5 918.6V934.0M1872.5 926.3V934.2M1873.5 917.4V934.6M1874.5 923.6V936.3M1875.5 930.0V938.9M1876.5 931.7V940.0M1877.5 932.4V942.5M1878.5 932.6V943.1M1879.5 938.8V945.2M1880.5 931.8V942.0M1881.5 920.1V939.3M1882.5 914.3V934.8M1883.5 907.4V929.7M1884.5 907.9V928.8M1885.5 909.7V931.0M1886.5 909.9V932.3M1887.5 911.2V932.8M1888.5 908.7V932.0M1889.5 911.9V933.1M1890.5 921.3V934.5M1891.5 928.4V940.6M1892.5 938.5V945.2M1893.5 942.7V949.6M1894.5 943.3V949.8M1895.5 943.4V950.7M1896.5 937.3V950.8M1897.5 939.3V950.6M1898.5 943.5V950.8M1899.5 942.1V949.0M1900.5 938.5V948.7M1901.5 940.4V948.2M1902.5 943.5V949.8M1903.5 941.9V950.2M1904.5 944.2V947.8M1905.5 942.4V949.1M1906.5 938.3V949.9M1907.5 942.1V950.0M1908.5 942.2V947.3M1909.5 935.5V949.2M1910.5 918.3V946.0M1911.5 937.0V945.9M1912.5 933.6V944.5M1913.5 922.6V943.9M1914.5 919.5V943.6M1915.5 879.8V942.2M1916.5 888.5V938.2M1917.5 817.2V936.1M1918.5 892.6V932.2" stroke="#f20d0d" stroke-width="1" fill="none" shape-rendering="crispEdges"/>
<path d="M1247.5 956.3V969.7M1248.5 962.7V968.6M1249.5 960.1V968.1M1250.5 960.6V968.9M1251.5 962.1V969.6M1252.5 961.0V969.8M1253.5 960.6V970.0M1254.5 959.9V969.7M1255.5 953.7V970.2M1256.5 960.9V970.0M1257.5 960.5V969.6M1258.5 958.1V969.6M1259.5 958.2V969.0M1260.5 961.1V969.2M1261.5 961.1V968.8M1262.5 960.9V971.0M1263.5 946.7V969.3M1264.5 918.3V969.7M1265.5 954.0V970.0M1266.5 947.6V968.1M1267.5 948.5V968.7M1268.5 936.5V969.3M1269.5 951.8V966.3M1270.5 942.9V968.5M1271.5 941.1V966.9M1272.5 908.7V965.9M1273.5 936.8V965.1M1274.5 950.8V964.7M1275.5 937.5V964.3M1276.5 950.4V963.7M1277.5 947.1V963.5M1278.5 905.5V963.5M1279.5 946.2V963.8M1280.5 933.0V962.1M1281.5 937.4V962.0M1282.5 940.6V960.8M1283.5 892.6V961.3M1284.5 899.0V961.8M1285.5 943.6V962.7M1286.5 946.1V961.0M1287.5 945.0V962.3M1288.5 952.1V966.9M1289.5 953.7V970.7M1290.5 955.0V972.7M1291.5 957.3V970.9M1292.5 956.5V970.6M1293.5 955.8V972.2M1294.5 956.4V971.8M1295.5 957.4V970.6M1296.5 955.3V971.7M1297.5 955.7V972.0M1298.5 956.6V971.3M1299.5 957.5V971.3M1300.5 956.6V972.6M1301.5 956.6V971.1M1302.5 956.4V971.0M1303.5 958.1V969.6M1304.5 951.3V965.2M1305.5 924.7V964.9M1306.5 946.9V963.3M1307.5 934.0V962.7M1308.5 940.4V963.6M1309.5 950.0V962.9M1310.5 944.3V964.5M1311.5 949.6V965.1M1312.5 947.3V965.4M1313.5 942.0V963.3M1314.5 949.5V965.8M1315.5 952.4V965.8M1316.5 949.9V966.4M1317.5 952.5V965.7M1318.5 957.3V966.4M1319.5 955.6V968.0M1320.5 956.3V968.0M1321.5 958.0V969.3M1322.5 949.6V969.8M1323.5 950.3V968.0M1324.5 958.6V970.0M1325.5 959.9V969.9M1326.5 955.0V968.7M1327.5 958.0V969.1M1328.5 959.0V970.0M1329.5 958.5V969.5M1330.5 956.7V969.3M1331.5 954.7V971.6M1332.5 958.6V970.3M1333.5 958.5V971.9M1334.5 957.5V969.6M1335.5 954.7V970.7M1336.5 961.2V970.8M1337.5 952.3V971.9M1338.5 957.9V970.6M1339.5 958.5V971.9M1340.5 959.9V970.7M1341.5 962.3V970.8M1342.5 958.5V972.1M1343.5 957.5V971.8M1344.5 961.6V973.0M1345.5 961.2V971.7M1346.5 960.0V971.2M1347.5 951.8V972.5M1348.5 959.9V970.8M1349.5 958.8V972.2M1350.5 962.7V973.0M1351.5 962.6V970.6M1352.5 962.7V972.3M1353.5 952.6V971.8M1354.5 961.5V973.1M1355.5 959.2V970.9M1356.5 957.6V970.3M1357.5 955.2V970.3M1358.5 961.8V969.8M1359.5 950.8V971.3M1360.5 955.9V970.3M1361.5 955.1V968.8M1362.5 954.5V969.7M1363.5 958.2V968.9M1364.5 952.3V968.3M1365.5 955.7V969.3M1366.5 959.0V968.9M1367.5 958.1V968.0M1368.5 949.2V967.2M1369.5 956.3V967.2M1370.5 955.5V967.9M1371.5 952.5V965.8M1372.5 954.7V966.7M1373.5 948.2V964.8M1374.5 954.3V964.6M1375.5 954.9V965.8M1376.5 955.7V964.4M1377.5 948.4V963.5M1378.5 952.7V962.9M1379.5 953.9V965.2M1380.5 952.4V965.4M1381.5 955.3V965.9M1382.5 959.8V966.2M1383.5 956.1V968.4M1384.5 959.6V968.3M1385.5 960.8V969.0M1386.5 960.0V970.7M1387.5 963.7V971.4M1388.5 956.6V970.9M1389.5 924.7V970.7M1390.5 956.7V971.3M1391.5 956.7V971.2M1392.5 963.5V970.1M1393.5 962.9V970.4M1394.5 961.9V971.2M1395.5 963.5V970.2M1396.5 963.1V969.0M1397.5 964.5V969.4M1398.5 964.6V969.5M1399.5 958.7V970.3M1400.5 960.1V968.8M1401.5 962.5V971.1M1402.5 964.4V969.1M1403.5 965.3V970.3M1404.5 965.3V971.0M1405.5 963.5V971.0M1406.5 965.6V970.4M1407.5 962.6V969.8M1408.5 953.7V968.4M1409.5 905.5V970.4M1410.5 956.6V968.5M1411.5 965.8V970.5M1412.5 964.8V970.0M1413.5 965.6V970.2M1414.5 965.5V969.8M1415.5 963.2V970.5M1416.5 963.8V969.4M1417.5 964.4V970.0M1418.5 962.0V968.9M1419.5 944.7V967.9M1420.5 860.5V968.1M1421.5 943.8V967.4M1422.5 955.3V964.4M1423.5 950.4V963.8M1424.5 946.3V964.7M1425.5 947.5V963.3M1426.5 951.9V962.3M1427.5 943.6V960.9M1428.5 946.4V960.7M1429.5 941.3V961.0M1430.5 947.6V962.1M1431.5 953.7V963.0M1432.5 959.1V964.0M1433.5 955.5V965.7M1434.5 961.3V964.5M1435.5 960.7V964.8M1436.5 959.9V966.2M1437.5 958.4V967.5M1438.5 961.0V965.7M1439.5 960.8V965.8M1440.5 960.1V966.1M1441.5 955.9V967.4M1442.5 959.7V966.4M1443.5 961.4V966.5M1444.5 959.3V969.0M1445.5 961.2V967.8M1446.5 957.8V969.2M1447.5 943.7V969.1M1448.5 913.5V969.6M1449.5 953.2V969.7M1450.5 956.1V968.5M1451.5 953.5V968.6M1452.5 956.8V968.5M1453.5 954.2V970.3M1454.5 960.9V969.9M1455.5 954.9V968.4M1456.5 960.1V969.4M1457.5 962.0V969.9M1458.5 962.6V969.5M1459.5 963.3V971.0M1460.5 963.6V969.1M1461.5 959.0V970.7M1462.5 955.3V969.3M1463.5 962.9V970.9M1464.5 963.7V970.7M1465.5 956.3V969.1M1466.5 959.2V969.2M1467.5 961.1V969.2M1468.5 962.3V971.0M1469.5 961.2V970.4M1470.5 963.5V970.5M1471.5 958.8V969.8M1472.5 963.4V970.1M1473.5 956.6V969.2M1474.5 960.2V970.8M1475.5 960.3V970.5M1476.5 963.8V969.4M1477.5 958.0V968.6M1478.5 962.6V970.1M1479.5 959.4V968.6M1480.5 955.5V969.4M1481.5 905.5V969.8M1482.5 946.6V969.4M1483.5 956.2V968.6M1484.5 962.7V969.1M1485.5 958.8V969.6M1486.5 962.4V969.0M1487.5 961.0V969.2M1488.5 962.8V969.1M1489.5 963.1V968.0M1490.5 963.3V969.3M1491.5 963.9V967.6M1492.5 963.1V967.4M1493.5 963.0V969.2M1494.5 961.8V967.9M1495.5 933.6V966.4M1496.5 894.2V966.2M1497.5 950.2V964.2M1498.5 956.2V964.7M1499.5 957.0V962.9M1500.5 954.2V963.2M1501.5 950.4V965.2M1502.5 953.3V963.4M1503.5 956.9V963.6M1504.5 955.3V964.7M1505.5 953.9V964.7M1506.5 957.9V966.4M1507.5 957.0V966.6M1508.5 955.3V967.1M1509.5 958.7V967.0M1510.5 955.4V967.0M1511.5 955.2V965.7M1512.5 956.1V967.4M1513.5 957.9V967.3M1514.5 959.2V966.0M1515.5 956.6V968.4M1516.5 959.1V968.1M1517.5 958.8V966.7M1518.5 958.8V968.1M1519.5 957.8V968.1M1520.5 958.3V967.8M1521.5 954.4V968.5M1522.5 958.6V968.1M1523.5 957.3V967.3M1524.5 959.8V967.4M1525.5 959.8V968.4M1526.5 960.5V968.3M1527.5 960.4V968.3M1528.5 957.1V966.9M1529.5 960.9V968.5M1530.5 961.6V968.5M1531.5 958.2V966.7M1532.5 962.4V967.5M1533.5 956.4V968.9M1534.5 960.5V968.5M1535.5 952.3V966.7M1536.5 895.8V966.9M1537.5 947.2V966.8M1538.5 963.6V966.8M1539.5 963.8V966.6M1540.5 963.3V966.6M1541.5 963.9V968.2M1542.5 962.7V967.1M1543.5 962.1V966.1M1544.5 961.5V965.4M1545.5 961.9V967.3M1546.5 961.2V966.0M1547.5 956.0V967.4M1548.5 959.7V965.3M1549.5 958.9V966.9M1550.5 953.9V965.8M1551.5 958.6V964.9M1552.5 958.8V965.7M1553.5 951.8V966.4M1554.5 957.1V965.4M1555.5 956.7V964.9M1556.5 949.3V965.7M1557.5 958.3V964.7M1558.5 957.3V966.0M1559.5 959.6V965.0M1560.5 952.4V967.5M1561.5 905.5V967.0M1562.5 949.6V966.6M1563.5 955.2V967.3M1564.5 960.6V968.3M1565.5 960.4V968.8M1566.5 958.2V967.8M1567.5 960.9V967.3M1568.5 962.6V968.4M1569.5 961.4V969.0M1570.5 963.5V968.5M1571.5 963.2V970.0M1572.5 959.7V968.6M1573.5 961.2V969.3M1574.5 932.5V969.9M1575.5 883.0V969.5M1576.5 953.5V968.5M1577.5 963.2V968.5M1578.5 962.1V969.1M1579.5 963.3V967.6M1580.5 962.7V969.6M1581.5 964.2V967.7M1582.5 960.9V969.9M1583.5 961.1V968.1M1584.5 962.6V969.9M1585.5 958.0V967.6M1586.5 960.8V968.9M1587.5 962.1V968.2M1588.5 957.5V968.3M1589.5 963.1V967.6M1590.5 960.6V967.9M1591.5 960.2V968.2M1592.5 960.9V969.0M1593.5 961.7V968.1M1594.5 962.5V967.9M1595.5 962.1V967.8M1596.5 963.0V967.9M1597.5 963.5V969.5M1598.5 962.1V968.4M1599.5 963.9V969.3M1600.5 963.2V969.1M1601.5 960.3V968.3M1602.5 962.7V969.6M1603.5 951.9V970.0M1604.5 918.3V969.9M1605.5 953.7V969.2M1606.5 964.7V968.9M1607.5 964.0V969.7M1608.5 963.6V969.3M1609.5 963.2V969.1M1610.5 965.3V969.4M1611.5 963.0V970.5M1612.5 964.9V970.2M1613.5 965.1V971.3M1614.5 965.3V971.7M1615.5 964.0V972.2M1616.5 966.1V971.6M1617.5 965.7V970.8M1618.5 963.7V970.7M1619.5 963.9V970.7M1620.5 966.0V971.9M1621.5 966.9V970.4M1622.5 962.9V971.4M1623.5 950.5V972.5M1624.5 892.6V972.5M1625.5 947.4V971.1M1626.5 965.1V972.4M1627.5 963.3V971.7M1628.5 965.8V971.9M1629.5 962.5V972.8M1630.5 963.1V972.5M1631.5 964.8V972.1M1632.5 963.0V971.8M1633.5 962.9V972.6M1634.5 960.5V972.4M1635.5 963.1V971.0M1636.5 963.1V972.2M1637.5 963.1V972.9M1638.5 964.2V971.7M1639.5 954.9V971.6M1640.5 961.1V971.1M1641.5 964.0V971.9M1642.5 957.5V970.6M1643.5 962.4V973.0M1644.5 956.5V971.6M1645.5 952.9V971.2M1646.5 959.4V971.9M1647.5 962.3V970.5M1648.5 962.6V971.1M1649.5 961.5V971.7M1650.5 960.3V970.2M1651.5 954.4V969.8M1652.5 958.4V970.6M1653.5 960.3V969.0M1654.5 956.8V969.0M1655.5 961.8V969.3M1656.5 960.5V967.0M1657.5 960.3V967.4M1658.5 957.6V967.1M1659.5 958.1V967.8M1660.5 957.5V964.9M1661.5 959.3V966.9M1662.5 956.7V964.8M1663.5 959.2V966.1M1664.5 959.5V964.2M1665.5 954.8V964.7M1666.5 899.6V965.3M1667.5 817.2V965.7M1668.5 879.8V965.8M1669.5 953.3V966.6M1670.5 961.5V966.5M1671.5 962.7V968.0M1672.5 955.4V970.3M1673.5 905.5V970.3M1674.5 949.8V969.5M1675.5 966.7V971.0M1676.5 964.4V973.5M1677.5 965.0V973.1M1678.5 963.8V974.1M1679.5 967.5V974.2M1680.5 962.2V974.3M1681.5 966.0V973.2M1682.5 965.4V972.9M1683.5 965.4V973.5M1684.5 967.7V972.1M1685.5 967.3V974.0M1686.5 961.1V974.1M1687.5 966.5V973.4M1688.5 961.4V972.0M1689.5 965.2V974.3M1690.5 961.0V973.1M1691.5 967.0V974.3M1692.5 965.1V972.8M1693.5 963.8V973.3M1694.5 967.0V974.6M1695.5 968.8V973.7M1696.5 961.3V974.4M1697.5 966.4V973.6M1698.5 967.7V972.4M1699.5 968.6V972.0M1700.5 961.7V974.4M1701.5 967.7V972.7M1702.5 964.4V971.4M1703.5 966.9V972.2M1704.5 965.9V971.3M1705.5 965.5V968.3M1706.5 963.9V967.3M1707.5 962.3V966.6M1708.5 963.1V966.8M1709.5 963.5V965.5M1710.5 963.7V966.7M1711.5 963.9V968.1M1712.5 962.8V969.3M1713.5 965.0V968.7M1714.5 963.6V969.9M1715.5 966.0V970.0M1716.5 964.0V971.2M1717.5 966.8V972.5M1718.5 966.3V969.6M1719.5 964.4V971.6M1720.5 959.3V970.6M1721.5 962.2V969.9M1722.5 963.8V969.5M1723.5 962.2V968.3M1724.5 958.3V966.6M1725.5 962.1V966.9M1726.5 958.7V965.9M1727.5 958.3V965.8M1728.5 958.7V965.1M1729.5 959.5V965.7M1730.5 958.5V963.8M1731.5 957.8V964.1M1732.5 956.5V962.4M1733.5 953.4V962.4M1734.5 952.7V960.5M1735.5 949.9V961.2M1736.5 951.3V960.2M1737.5 948.2V960.3M1738.5 948.4V958.3M1739.5 945.7V957.2M1740.5 945.6V958.3M1741.5 948.9V961.4M1742.5 940.6V963.5M1743.5 943.6V964.5M1744.5 954.4V967.9M1745.5 954.0V968.9M1746.5 959.6V971.6M1747.5 962.2V970.8M1748.5 958.1V970.4M1749.5 955.8V971.5M1750.5 960.6V970.4M1751.5 957.8V971.2M1752.5 962.0V972.2M1753.5 961.1V972.0M1754.5 962.8V971.8M1755.5 960.7V973.0M1756.5 963.6V972.0M1757.5 963.4V971.0M1758.5 962.0V971.1M1759.5 962.1V971.5M1760.5 956.5V971.4M1761.5 963.0V972.8M1762.5 956.1V971.6M1763.5 963.1V972.2M1764.5 959.6V973.0M1765.5 962.1V972.2M1766.5 964.9V971.9M1767.5 964.5V971.4M1768.5 959.7V971.7M1769.5 962.8V971.4M1770.5 960.7V971.9M1771.5 962.4V971.0M1772.5 963.2V971.6M1773.5 961.6V972.0M1774.5 961.8V971.0M1775.5 961.5V971.2M1776.5 954.6V972.8M1777.5 959.0V972.0M1778.5 961.0V971.3M1779.5 952.0V972.2M1780.5 951.0V971.8M1781.5 952.2V970.9M1782.5 950.6V971.1M1783.5 953.3V971.7M1784.5 952.7V971.2M1785.5 950.6V971.0M1786.5 951.3V972.0M1787.5 951.2V972.3M1788.5 953.1V973.0M1789.5 952.9V972.3M1790.5 951.4V972.1M1791.5 953.7V972.6M1792.5 953.5V973.0M1793.5 952.0V971.7M1794.5 953.7V972.6M1795.5 954.1V972.4M1796.5 950.7V970.5M1797.5 950.6V972.4M1798.5 921.5V971.2M1799.5 957.5V971.9M1800.5 953.7V971.0M1801.5 963.5V971.6M1802.5 958.9V971.3M1803.5 963.7V969.0M1804.5 961.8V969.2M1805.5 957.7V970.3M1806.5 963.1V969.4M1807.5 961.5V971.4M1808.5 962.5V969.3M1809.5 956.0V969.8M1810.5 962.4V970.4M1811.5 960.9V970.4M1812.5 963.2V971.1M1813.5 956.0V970.6M1814.5 961.7V970.4M1815.5 959.6V969.5M1816.5 961.7V970.9M1817.5 958.1V970.6M1818.5 960.4V969.0M1819.5 963.7V970.4M1820.5 964.0V970.7M1821.5 957.4V967.5M1822.5 955.2V965.1M1823.5 951.4V961.5M1824.5 944.9V961.2M1825.5 952.4V961.0M1826.5 952.3V961.5M1827.5 955.4V960.9M1828.5 953.7V962.9M1829.5 953.3V962.3M1830.5 953.3V962.4M1831.5 954.5V964.6M1832.5 953.8V964.3M1833.5 957.3V964.1M1834.5 957.2V963.9M1835.5 956.8V966.5M1836.5 960.4V965.8M1837.5 962.3V966.2M1838.5 961.1V967.6M1839.5 962.5V969.0M1840.5 958.4V969.0M1841.5 957.9V969.4M1842.5 962.0V970.2M1843.5 962.3V969.9M1844.5 965.8V971.2M1845.5 967.6V972.2M1846.5 964.7V972.6M1847.5 965.6V971.1M1848.5 967.6V972.3M1849.5 964.8V971.7M1850.5 964.7V972.4M1851.5 965.1V973.0M1852.5 964.5V971.2M1853.5 965.9V970.5M1854.5 965.7V972.3M1855.5 966.0V970.9M1856.5 966.0V971.0M1857.5 961.9V972.9M1858.5 963.5V973.1M1859.5 963.9V972.7M1860.5 963.4V972.3M1861.5 966.5V970.7M1862.5 958.6V972.8M1863.5 958.0V969.7M1864.5 954.4V968.6M1865.5 952.0V965.2M1866.5 942.9V961.7M1867.5 939.8V957.8M1868.5 931.6V955.5M1869.5 936.7V950.5M1870.5 926.8V947.3M1871.5 923.9V949.4M1872.5 936.9V952.6M1873.5 940.0V954.2M1874.5 939.8V958.2M1875.5 946.4V961.0M1876.5 954.2V965.5M1877.5 956.5V967.7M1878.5 954.3V965.0M1879.5 951.4V962.0M1880.5 949.5V961.7M1881.5 946.5V960.4M1882.5 936.7V957.1M1883.5 943.9V954.8M1884.5 940.4V952.3M1885.5 937.6V950.2M1886.5 939.3V953.3M1887.5 928.8V956.9M1888.5 940.9V962.2M1889.5 936.0V964.0M1890.5 953.9V966.9M1891.5 957.7V971.0M1892.5 964.1V972.4M1893.5 963.6V970.8M1894.5 963.7V970.9M1895.5 959.8V972.3M1896.5 962.4V970.8M1897.5 956.9V971.5M1898.5 959.2V972.2M1899.5 963.1V970.8M1900.5 963.8V972.3M1901.5 959.2V971.7M1902.5 957.9V972.6M1903.5 959.4V971.9M1904.5 961.5V972.0M1905.5 956.6V971.8M1906.5 962.8V971.4M1907.5 959.6V971.0M1908.5 963.0V972.5M1909.5 961.8V972.3M1910.5 959.9V973.0M1911.5 962.4V973.8M1912.5 960.3V974.3M1913.5 924.7V976.1M1914.5 959.0V977.6M1915.5 962.5V976.7M1916.5 950.4V975.8M1917.5 908.7V972.2M1918.5 925.0V969.3" stroke="#1fe61f" stroke-width="1" fill="none" shape-rendering="crispEdges"/>
</g>
<rect x="1577" y="721" width="13" height="274" fill="#ffffc8" fill-opacity="0.8"/>
<rect x="1576" y="721" width="1" height="274" fill="#7d7d6a"/>
<rect x="1590" y="721" width="1" height="274" fill="#7d7d6a"/>
</svg>
<div class="a" style="left:1247px;top:996px;width:672px;height:16px;background:#f1f1f1;border-bottom:1px solid #8b98a6"></div>
<div class="a sbh" style="left:1247px;top:996px;width:16px;height:15px;border-right:1px solid #8b98a6"></div>
<div class="a sbh" style="left:1902px;top:996px;width:16px;height:15px;border-right:1px solid #8b98a6"></div>
<div class="a" style="left:1493px;top:996px;width:409px;height:16px;border:1px solid #6b7f98;border-top:0;background:linear-gradient(#d3e0f2 0%,#fff 32%,#e3ecf6 58%,#bdd0ec 100%)"></div>
<svg class="a" style="left:1247px;top:996px" width="672" height="15" viewBox="0 0 672 15"><path d="M10 5v8l-4-4z" fill="#222"/><path d="M662 5v8l4-4z" fill="#222"/><path d="M447.5 4v7M449.5 4v7M451.5 4v7" stroke="#7f95b0"/></svg>
<b class="a st" style="left:0;top:1016px;line-height:14px;white-space:pre;letter-spacing:0.02px">57.2 s (1) 63.035 +/- 0.290 kn  57.2 s (2) 63.025 +/- 0.283 kn  57.2 s (3) 63.039 +/- 0.160 kn</b>
<b class="a st" style="right:4px;top:1016px;line-height:14px;white-space:pre;letter-spacing:0.045px">M8_ROM3bn_2306101315.gpy &amp; M9_ublox_2306101315.gpy &amp; M10_Ali_2306101315.gpy</b>
</body></html>
